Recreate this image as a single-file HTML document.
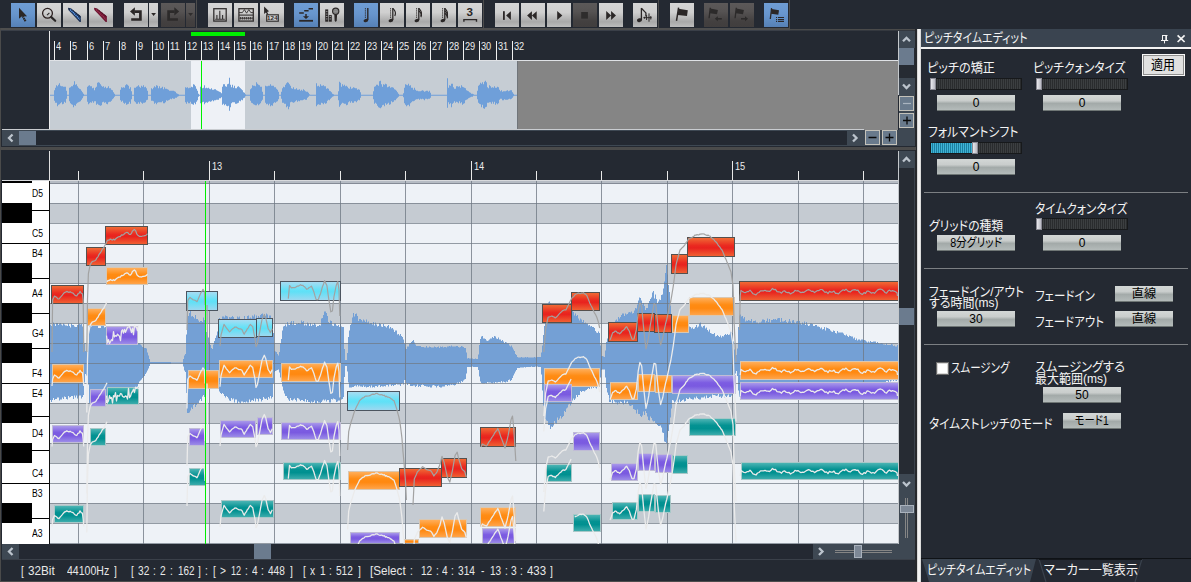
<!DOCTYPE html>
<html><head><meta charset="utf-8"><title>Pitch Time Edit</title>
<style>
html,body{margin:0;padding:0;background:#242932;}
#app{position:relative;width:1191px;height:582px;overflow:hidden;background:#242932;font-family:"Liberation Sans","Noto Sans CJK JP",sans-serif;color:#f2f2f2;}
#app div,#app span,#app svg{position:absolute;box-sizing:border-box;}
.tb{top:3px;width:24px;height:24px;background:linear-gradient(to bottom,#d5d5d5 0%,#cfcfcf 40%,#a9a9a9 78%,#bcbcbc 100%);}
.tb.bl{background:linear-gradient(to bottom,#6f9dd4 0%,#6896ce 45%,#5681b6 100%);}
.tb.dk{background:linear-gradient(to bottom,#5c5959 0%,#565353 35%,#434040 75%,#413e3e 100%);}
.tb svg{left:0;top:0;width:24px;height:24px;}
.dd{top:3px;width:9px;height:24px;background:linear-gradient(to bottom,#d5d5d5 0%,#cfcfcf 40%,#a9a9a9 78%,#bcbcbc 100%);}
.dd.dk{background:linear-gradient(to bottom,#5c5959 0%,#565353 35%,#434040 75%,#413e3e 100%);}
.sbb{background:#3e4853;}
.thumb{background:#6b7b8e;}
.pm{background:#697a8c;border:1px solid #c4c2ba;}
.lbl{font-size:13px;line-height:13px;white-space:nowrap;color:#f4f4f4;font-feature-settings:"palt";transform-origin:0 0;}
.vbtn{height:16px;background:linear-gradient(to bottom,#d3d7d6 0%,#c9cdcc 38%,#a3aaa9 56%,#b4bbba 100%);border-bottom:1px solid #6f7675;color:#000;font-size:12px;line-height:17px;text-align:center;white-space:nowrap;}
.vbtn span{position:static !important;display:inline-block;font-feature-settings:"palt";}
.sl{height:12px;background:repeating-linear-gradient(to right,#3c3f41 0px,#3c3f41 1px,#2a2c2e 1px,#2a2c2e 2px);border:1px solid #17191b;}
.slh{width:6px;height:12px;background:linear-gradient(to right,#e9e9ee,#b9b9c2);border:1px solid #8a8a94;}
.sep{height:1px;background:#7c7f83;left:924px;width:264px;}
.kl{font-size:10px;line-height:10px;color:#000;left:32px;transform:scaleX(0.86);transform-origin:0 0;white-space:nowrap;}
.rl{font-size:10px;line-height:10px;color:#ececec;white-space:nowrap;transform:scaleX(0.92);transform-origin:0 0;}
.st{font-size:12px;line-height:12px;top:564.5px;color:#e8e8e8;white-space:pre;transform-origin:0 0;}
</style></head><body>
<div id="app">
<div class="tb bl" style="left:11px"><svg viewBox="0 0 24 24"><path d="M8 4.8 L8 15.8 L10.6 13.4 L12.3 13.4 L16 13.2 Z" fill="#2b2727"/><path d="M11.6 13.2 L14.6 18.4" stroke="#2b2727" stroke-width="2.1" stroke-dasharray="1.6 0.5"/></svg></div>
<div class="tb " style="left:37px"><svg viewBox="0 0 24 24"><circle cx="10.5" cy="10.3" r="4.9" fill="none" stroke="#2a1e1e" stroke-width="1.3"/><path d="M14.3 14.1 L18.2 17.8" stroke="#2b2727" stroke-width="2.2" stroke-linecap="round"/><path d="M10 12.2 L12.4 9.9" stroke="#2b2727" stroke-width="1.1"/></svg></div>
<div class="tb " style="left:63px"><svg viewBox="0 0 24 24"><path d="M5 4.8 L7.6 5.3 L17.9 13.2 L17.9 18.9 L16.7 18.9 L5.4 7 Z" fill="#1c2f52"/><path d="M7.2 6.6 L17 16.4" stroke="#5b9cf0" stroke-width="1.5" stroke-dasharray="1.2 0.7"/><path d="M8.6 6.2 L17.6 13.6" stroke="#0e1830" stroke-width="1" stroke-dasharray="1 1"/></svg></div>
<div class="tb " style="left:89px"><svg viewBox="0 0 24 24"><path d="M5 4.8 L7.6 5.3 L17.9 13.2 L17.9 18.9 L16.7 18.9 L5.4 7 Z" fill="#6e1430"/><path d="M7.2 6.6 L17 16.4" stroke="#98304e" stroke-width="1.4" stroke-dasharray="1.2 0.7"/><path d="M8.6 6.2 L17.6 13.6" stroke="#3a0a18" stroke-width="1" stroke-dasharray="1 1"/></svg></div>
<div class="tb " style="left:124px"><svg viewBox="0 0 24 24"><path d="M10.5 8.6 H16.4 V16.5 H7.2" fill="none" stroke="#2b2727" stroke-width="2.7"/><path d="M6 8.5 L10.9 4.2 V12.8 Z" fill="#2b2727"/></svg></div>
<div class="tb dk" style="left:161px"><svg viewBox="0 0 24 24"><path d="M13.6 8.6 H7.6 V16.5 H16.9" fill="none" stroke="#2c2a2a" stroke-width="2.7"/><path d="M18.2 8.4 L13.3 4.2 V12.6 Z" fill="#2c2a2a"/></svg></div>
<div class="tb " style="left:208px"><svg viewBox="0 0 24 24"><rect x="5.8" y="5.7" width="12.4" height="12.4" fill="none" stroke="#333030" stroke-width="1.3"/><path d="M8.9 16 V12.1 M11.8 16 V7.7 M14.6 16 V12.1" stroke="#333030" stroke-width="1.1"/><path d="M7.2 16.3 H16.8" stroke="#333030" stroke-width="0.9"/></svg></div>
<div class="tb " style="left:234px"><svg viewBox="0 0 24 24"><rect x="4.9" y="5.7" width="14.4" height="12.4" fill="none" stroke="#333030" stroke-width="1.3"/><path d="M5 9.6 H8.4 L10.4 6.6 L12.6 10.2 L14.8 6.6 L16.8 9.6 H19" fill="none" stroke="#333030" stroke-width="0.9"/><path d="M5 12.1 H19" stroke="#333030" stroke-width="1.1"/><path d="M5.5 15.2 H18.8" stroke="#333030" stroke-width="0.9"/><path d="M6.2 15.2 H18.6" stroke="#333030" stroke-width="2.6" stroke-dasharray="0.9 1.1"/></svg></div>
<div class="tb " style="left:260px"><svg viewBox="0 0 24 24"><g transform="translate(-2,0)"><path d="M6.1 3.6 L6.1 11 L7.9 9.4 L9.4 12 L10.4 11.4 L9.2 9 L11 8.2 Z" fill="#2b2727"/><rect x="8.7" y="11.8" width="11.6" height="6.4" fill="#cfcfcf" stroke="#333030" stroke-width="1.2"/><text x="14.5" y="17.3" font-size="6.2" text-anchor="middle" fill="#2b2727" font-family="Liberation Sans,sans-serif" font-weight="bold" letter-spacing="0.3">124</text></g></svg></div>
<div class="tb bl" style="left:294px"><svg viewBox="0 0 24 24"><path d="M14.6 5.7 H19 M10.2 7.8 H14.6 M5.2 10 H9.8" stroke="#2b2727" stroke-width="1.6"/><path d="M12 11 V14" stroke="#2b2727" stroke-width="1.5"/><path d="M8.9 13.3 H15.1 L12 15.9 Z" fill="#2b2727"/><path d="M5.2 17.8 H19" stroke="#2b2727" stroke-width="1.8"/></svg></div>
<div class="tb " style="left:320px"><svg viewBox="0 0 24 24"><rect x="5.2" y="6.4" width="3" height="12.3" fill="#2b2727"/><rect x="8.8" y="12.1" width="3" height="6.6" fill="#2b2727"/><path d="M5.9 8.6 H7.5" stroke="#bdbdbd" stroke-width="0.7"/><path d="M5.9 11.05 H7.5" stroke="#bdbdbd" stroke-width="0.7"/><path d="M5.9 13.5 H7.5" stroke="#bdbdbd" stroke-width="0.7"/><path d="M5.9 15.95 H7.5" stroke="#bdbdbd" stroke-width="0.7"/><path d="M9.5 13.5 H11.1" stroke="#bdbdbd" stroke-width="0.7"/><path d="M9.5 15.95 H11.1" stroke="#bdbdbd" stroke-width="0.7"/><circle cx="15.7" cy="8.2" r="3.1" fill="#979797" stroke="#2b2727" stroke-width="1.2"/><path d="M13.2 7.2 H18.2 M13.2 9.2 H18.2" stroke="#6a6a6a" stroke-width="0.6"/><path d="M14.3 11.5 H17.1 L16.7 17.8 L15.7 19 L14.7 17.8 Z" fill="#2b2727"/></svg></div>
<div class="tb bl" style="left:354px"><svg viewBox="0 0 24 24"><path d="M13.8 4.9 V17" stroke="#2b2727" stroke-width="1.4"/><path d="M11.4 5.2 V15.6" stroke="#2b2727" stroke-width="1" stroke-dasharray="1.2 0.9"/><ellipse cx="11.9" cy="17.5" rx="2.4" ry="1.7" fill="#2b2727" transform="rotate(-18 11.9 17.5)"/></svg></div>
<div class="tb " style="left:380px"><svg viewBox="0 0 24 24"><path d="M12.8 4.9 V17" stroke="#2b2727" stroke-width="1.3"/><path d="M10.6 5.2 V15.6" stroke="#2b2727" stroke-width="1" stroke-dasharray="1.2 0.9"/><ellipse cx="10.9" cy="17.5" rx="2.4" ry="1.7" fill="#2b2727" transform="rotate(-18 10.9 17.5)"/><path d="M12.8 5.4 C14.6 7.0 16.8 9.0 14.8 13.0" fill="none" stroke="#2b2727" stroke-width="1.2"/></svg></div>
<div class="tb " style="left:406px"><svg viewBox="0 0 24 24"><path d="M12.8 4.9 V17" stroke="#2b2727" stroke-width="1.3"/><path d="M10.6 5.2 V15.6" stroke="#2b2727" stroke-width="1" stroke-dasharray="1.2 0.9"/><ellipse cx="10.9" cy="17.5" rx="2.4" ry="1.7" fill="#2b2727" transform="rotate(-18 10.9 17.5)"/><path d="M12.8 5.4 C14.6 7.0 16.8 9.0 14.8 13.0" fill="none" stroke="#2b2727" stroke-width="1.2"/><path d="M12.8 7.8 C14.6 9.4 16.8 11.4 14.8 14.2" fill="none" stroke="#2b2727" stroke-width="1.2"/></svg></div>
<div class="tb " style="left:432px"><svg viewBox="0 0 24 24"><path d="M12.8 4.9 V17" stroke="#2b2727" stroke-width="1.3"/><path d="M10.6 5.2 V15.6" stroke="#2b2727" stroke-width="1" stroke-dasharray="1.2 0.9"/><ellipse cx="10.9" cy="17.5" rx="2.4" ry="1.7" fill="#2b2727" transform="rotate(-18 10.9 17.5)"/><path d="M12.8 5.4 C14.6 7.0 16.8 9.0 14.8 13.0" fill="none" stroke="#2b2727" stroke-width="1.2"/><path d="M12.8 7.8 C14.6 9.4 16.8 11.4 14.8 14.2" fill="none" stroke="#2b2727" stroke-width="1.2"/><path d="M12.8 10.2 C14.6 11.8 16.8 13.8 14.8 15.4" fill="none" stroke="#2b2727" stroke-width="1.2"/></svg></div>
<div class="tb " style="left:458px"><svg viewBox="0 0 24 24"><text x="11.7" y="13.4" font-size="11.6" font-weight="bold" text-anchor="middle" fill="#2b2727" font-family="Liberation Sans,sans-serif">3</text><path d="M5.9 18.8 V16.6 H18.5 V18.8" fill="none" stroke="#2b2727" stroke-width="1.4"/></svg></div>
<div class="tb " style="left:495px"><svg viewBox="0 0 24 24"><rect x="8" y="8.2" width="1.8" height="8.7" fill="#2b2727"/><path d="M15.9 8.2 V16.9 L11.1 12.55 Z" fill="#2b2727"/></svg></div>
<div class="tb " style="left:521px"><svg viewBox="0 0 24 24"><path d="M10.9 8.2 V16.9 L6.1 12.55 Z M15.7 8.2 V16.9 L10.9 12.55 Z" fill="#2b2727"/></svg></div>
<div class="tb " style="left:547px"><svg viewBox="0 0 24 24"><path d="M10.2 7.9 V17 L15.3 12.45 Z" fill="#2b2727"/></svg></div>
<div class="tb dk" style="left:573px"><svg viewBox="0 0 24 24"><rect x="8.2" y="9" width="6.7" height="6.6" fill="#2e2c2c"/></svg></div>
<div class="tb " style="left:599px"><svg viewBox="0 0 24 24"><path d="M7.2 7.9 V17 L12.1 12.45 Z M12.1 7.9 V17 L17 12.45 Z" fill="#2b2727"/></svg></div>
<div class="tb " style="left:633px"><svg viewBox="0 0 24 24"><path d="M8.4 5 V17" stroke="#2b2727" stroke-width="1.3"/><path d="M8.4 5.2 L12.9 9.9 V13.4" fill="none" stroke="#2b2727" stroke-width="1.3"/><ellipse cx="6.5" cy="17.2" rx="2.6" ry="1.9" fill="#2b2727" transform="rotate(-15 6.5 17.2)"/><path d="M10.6 14.7 H18.6 M13.6 12.1 V17 M16 10.4 V18.7 M17.8 13 V16.5" stroke="#2b2727" stroke-width="1"/><path d="M10.3 14.7 L12 13.5 V15.9 Z" fill="#2b2727"/></svg></div>
<div class="tb " style="left:670px"><svg viewBox="0 0 24 24"><path d="M8.6 4.7 L6.5 17.8" stroke="#2b2727" stroke-width="1.5"/><path d="M8.6 5.8 L17.8 7.3 L17 13 L7.6 12 Z" fill="#2b2727"/></svg></div>
<div class="tb dk" style="left:704px"><svg viewBox="0 0 24 24"><path d="M6.3 4.7 L5.1 15.2" stroke="#2c2a2a" stroke-width="1.3"/><path d="M6.4 5.6 L13.9 6.9 L13 11.2 L5.7 10.3 Z" fill="#2c2a2a"/><path d="M12 15.8 H17.8" stroke="#2c2a2a" stroke-width="1.6"/><path d="M10.8 15.8 L13.8 13.3 V18.3 Z" fill="#2c2a2a"/></svg></div>
<div class="tb dk" style="left:730px"><svg viewBox="0 0 24 24"><path d="M6.3 4.7 L5.1 15.2" stroke="#2c2a2a" stroke-width="1.3"/><path d="M6.4 5.6 L13.9 6.9 L13 11.2 L5.7 10.3 Z" fill="#2c2a2a"/><path d="M11 15.8 H16.8" stroke="#2c2a2a" stroke-width="1.6"/><path d="M18 15.8 L15 13.3 V18.3 Z" fill="#2c2a2a"/></svg></div>
<div class="tb bl" style="left:764px"><svg viewBox="0 0 24 24"><path d="M7.6 5.1 L6.3 16" stroke="#2b2727" stroke-width="1.3"/><path d="M7.7 6 L15 7.3 L14.3 11.7 L7 10.8 Z" fill="#2b2727"/><path d="M12 14.5 H13.1 M14 14.5 H20 M12 16.5 H13.1 M14 16.5 H20 M12 18.4 H13.1 M14 18.4 H20" stroke="#2b2727" stroke-width="1.1"/></svg></div>
<div class="dd" style="left:149px"><svg viewBox="0 0 9 24" style="left:0;top:0;width:9px;height:24px"><path d="M2.2 10.1 H7 L4.6 13 Z" fill="#2b2727"/></svg></div>
<div class="dd dk" style="left:186px"><svg viewBox="0 0 9 24" style="left:0;top:0;width:9px;height:24px"><path d="M2.2 10.1 H7 L4.6 13 Z" fill="#2f2d2d"/></svg></div>
<div style="left:196px;top:0;width:1px;height:28px;background:#4c4c4c"></div>
<div style="left:483px;top:0;width:1px;height:28px;background:#4c4c4c"></div>
<div style="left:658px;top:0;width:1px;height:28px;background:#4c4c4c"></div>
<div style="left:789px;top:0;width:1px;height:28px;background:#4c4c4c"></div>
<div style="left:0;top:28px;width:790px;height:2px;background:#4e4e4e"></div>
<div style="left:0;top:28px;width:1px;height:554px;background:#4a4a4a"></div>
<div style="left:1px;top:30px;width:897px;height:1px;background:#3a3f48"></div>
<div style="left:790px;top:29px;width:126px;height:1px;background:#4a4a4a"></div>
<div style="left:790px;top:30px;width:126px;height:1px;background:#34383f"></div>
<div style="left:49px;top:60px;width:849px;height:1px;background:#dfe2e6"></div>
<div style="left:50px;top:61px;width:468px;height:68px;background:#c6cdd4"></div>
<div style="left:518px;top:61px;width:380px;height:69px;background:#858585"></div>
<div style="left:191px;top:61px;width:54px;height:68px;background:#eef1f6"></div>
<div style="left:2px;top:129px;width:862px;height:1px;background:#c9ccd0"></div>
<div style="left:49px;top:31px;width:1px;height:98px;background:#ececec"></div>
<div style="left:191px;top:32px;width:54px;height:4px;background:#00ee00"></div>
<div style="left:54px;top:41px;width:1px;height:19px;background:#f0f0f0"></div><div class="rl" style="left:56px;top:42px">4</div>
<div style="left:70px;top:41px;width:1px;height:19px;background:#f0f0f0"></div><div class="rl" style="left:72px;top:42px">5</div>
<div style="left:87px;top:41px;width:1px;height:19px;background:#f0f0f0"></div><div class="rl" style="left:89px;top:42px">6</div>
<div style="left:103px;top:41px;width:1px;height:19px;background:#f0f0f0"></div><div class="rl" style="left:105px;top:42px">7</div>
<div style="left:119px;top:41px;width:1px;height:19px;background:#f0f0f0"></div><div class="rl" style="left:121px;top:42px">8</div>
<div style="left:136px;top:41px;width:1px;height:19px;background:#f0f0f0"></div><div class="rl" style="left:138px;top:42px">9</div>
<div style="left:152px;top:41px;width:1px;height:19px;background:#f0f0f0"></div><div class="rl" style="left:154px;top:42px">10</div>
<div style="left:168px;top:41px;width:1px;height:19px;background:#f0f0f0"></div><div class="rl" style="left:170px;top:42px">11</div>
<div style="left:185px;top:41px;width:1px;height:19px;background:#f0f0f0"></div><div class="rl" style="left:187px;top:42px">12</div>
<div style="left:201px;top:41px;width:1px;height:19px;background:#f0f0f0"></div><div class="rl" style="left:203px;top:42px">13</div>
<div style="left:218px;top:41px;width:1px;height:19px;background:#f0f0f0"></div><div class="rl" style="left:220px;top:42px">14</div>
<div style="left:234px;top:41px;width:1px;height:19px;background:#f0f0f0"></div><div class="rl" style="left:236px;top:42px">15</div>
<div style="left:250px;top:41px;width:1px;height:19px;background:#f0f0f0"></div><div class="rl" style="left:252px;top:42px">16</div>
<div style="left:267px;top:41px;width:1px;height:19px;background:#f0f0f0"></div><div class="rl" style="left:269px;top:42px">17</div>
<div style="left:283px;top:41px;width:1px;height:19px;background:#f0f0f0"></div><div class="rl" style="left:285px;top:42px">18</div>
<div style="left:299px;top:41px;width:1px;height:19px;background:#f0f0f0"></div><div class="rl" style="left:301px;top:42px">19</div>
<div style="left:316px;top:41px;width:1px;height:19px;background:#f0f0f0"></div><div class="rl" style="left:318px;top:42px">20</div>
<div style="left:332px;top:41px;width:1px;height:19px;background:#f0f0f0"></div><div class="rl" style="left:334px;top:42px">21</div>
<div style="left:348px;top:41px;width:1px;height:19px;background:#f0f0f0"></div><div class="rl" style="left:350px;top:42px">22</div>
<div style="left:365px;top:41px;width:1px;height:19px;background:#f0f0f0"></div><div class="rl" style="left:367px;top:42px">23</div>
<div style="left:381px;top:41px;width:1px;height:19px;background:#f0f0f0"></div><div class="rl" style="left:383px;top:42px">24</div>
<div style="left:397px;top:41px;width:1px;height:19px;background:#f0f0f0"></div><div class="rl" style="left:399px;top:42px">25</div>
<div style="left:414px;top:41px;width:1px;height:19px;background:#f0f0f0"></div><div class="rl" style="left:416px;top:42px">26</div>
<div style="left:430px;top:41px;width:1px;height:19px;background:#f0f0f0"></div><div class="rl" style="left:432px;top:42px">27</div>
<div style="left:447px;top:41px;width:1px;height:19px;background:#f0f0f0"></div><div class="rl" style="left:449px;top:42px">28</div>
<div style="left:463px;top:41px;width:1px;height:19px;background:#f0f0f0"></div><div class="rl" style="left:465px;top:42px">29</div>
<div style="left:479px;top:41px;width:1px;height:19px;background:#f0f0f0"></div><div class="rl" style="left:481px;top:42px">30</div>
<div style="left:496px;top:41px;width:1px;height:19px;background:#f0f0f0"></div><div class="rl" style="left:498px;top:42px">31</div>
<div style="left:512px;top:41px;width:1px;height:19px;background:#f0f0f0"></div><div class="rl" style="left:514px;top:42px">32</div>
<svg style="left:0;top:0;width:1191px;height:582px" viewBox="0 0 1191 582"><path d="M50 94.8 L51 94.8 L51 94.8 L52 94.8 L52 94.8 L53 94.8 L53 94.8 L54 94.8 L54 90.3 L55 90.3 L55 87.8 L56 87.8 L56 85.3 L57 85.3 L57 86.3 L58 86.3 L58 84.8 L59 84.8 L59 83.3 L60 83.3 L60 85.8 L61 85.8 L61 86.3 L62 86.3 L62 86.3 L63 86.3 L63 86.8 L64 86.8 L64 86.8 L65 86.8 L65 86.8 L66 86.8 L66 90.8 L67 90.8 L67 94.8 L68 94.8 L68 94.8 L69 94.8 L69 87.8 L70 87.8 L70 87.3 L71 87.3 L71 86.3 L72 86.3 L72 86.3 L73 86.3 L73 84.8 L74 84.8 L74 81.3 L75 81.3 L75 84.8 L76 84.8 L76 84.3 L77 84.3 L77 86.3 L78 86.3 L78 87.8 L79 87.8 L79 88.8 L80 88.8 L80 89.3 L81 89.3 L81 90.8 L82 90.8 L82 92.3 L83 92.3 L83 93.8 L84 93.8 L84 94.8 L85 94.8 L85 94.8 L86 94.8 L86 94.8 L87 94.8 L87 86.8 L88 86.8 L88 85.8 L89 85.8 L89 85.3 L90 85.3 L90 86.3 L91 86.3 L91 86.3 L92 86.3 L92 88.3 L93 88.3 L93 87.8 L94 87.8 L94 90.3 L95 90.3 L95 87.8 L96 87.8 L96 86.8 L97 86.8 L97 82.8 L98 82.8 L98 82.3 L99 82.3 L99 82.8 L100 82.8 L100 84.3 L101 84.3 L101 85.8 L102 85.8 L102 86.8 L103 86.8 L103 86.3 L104 86.3 L104 87.8 L105 87.8 L105 86.8 L106 86.8 L106 88.3 L107 88.3 L107 87.8 L108 87.8 L108 86.3 L109 86.3 L109 88.3 L110 88.3 L110 88.3 L111 88.3 L111 89.8 L112 89.8 L112 90.3 L113 90.3 L113 92.3 L114 92.3 L114 93.8 L115 93.8 L115 94.8 L116 94.8 L116 94.8 L117 94.8 L117 94.8 L118 94.8 L118 94.8 L119 94.8 L119 94.8 L120 94.8 L120 89.8 L121 89.8 L121 87.3 L122 87.3 L122 87.8 L123 87.8 L123 87.3 L124 87.3 L124 87.8 L125 87.8 L125 85.3 L126 85.3 L126 84.3 L127 84.3 L127 84.8 L128 84.8 L128 85.8 L129 85.8 L129 88.8 L130 88.8 L130 87.3 L131 87.3 L131 91.3 L132 91.3 L132 94.8 L133 94.8 L133 94.8 L134 94.8 L134 87.8 L135 87.8 L135 87.8 L136 87.8 L136 86.8 L137 86.8 L137 86.3 L138 86.3 L138 85.3 L139 85.3 L139 86.8 L140 86.8 L140 87.8 L141 87.8 L141 85.8 L142 85.8 L142 86.8 L143 86.8 L143 85.3 L144 85.3 L144 87.3 L145 87.3 L145 86.8 L146 86.8 L146 88.3 L147 88.3 L147 90.8 L148 90.8 L148 94.8 L149 94.8 L149 94.8 L150 94.8 L150 94.8 L151 94.8 L151 88.3 L152 88.3 L152 89.3 L153 89.3 L153 87.8 L154 87.8 L154 86.3 L155 86.3 L155 87.3 L156 87.3 L156 85.3 L157 85.3 L157 85.8 L158 85.8 L158 88.3 L159 88.3 L159 86.3 L160 86.3 L160 88.3 L161 88.3 L161 87.8 L162 87.8 L162 86.8 L163 86.8 L163 89.3 L164 89.3 L164 87.3 L165 87.3 L165 88.8 L166 88.8 L166 88.8 L167 88.8 L167 89.3 L168 89.3 L168 89.8 L169 89.8 L169 90.8 L170 90.8 L170 90.8 L171 90.8 L171 90.8 L172 90.8 L172 90.8 L173 90.8 L173 90.8 L174 90.8 L174 91.3 L175 91.3 L175 91.8 L176 91.8 L176 93.3 L177 93.3 L177 93.8 L178 93.8 L178 94.3 L179 94.3 L179 94.8 L180 94.8 L180 94.8 L181 94.8 L181 94.8 L182 94.8 L182 94.8 L183 94.8 L183 94.8 L184 94.8 L184 94.8 L185 94.8 L185 87.3 L186 87.3 L186 87.8 L187 87.8 L187 87.3 L188 87.3 L188 88.3 L189 88.3 L189 87.8 L190 87.8 L190 87.8 L191 87.8 L191 86.8 L192 86.8 L192 87.3 L193 87.3 L193 84.3 L194 84.3 L194 84.8 L195 84.8 L195 86.3 L196 86.3 L196 88.8 L197 88.8 L197 90.8 L198 90.8 L198 93.8 L199 93.8 L199 94.8 L200 94.8 L200 86.8 L201 86.8 L201 85.8 L202 85.8 L202 88.3 L203 88.3 L203 87.8 L204 87.8 L204 85.3 L205 85.3 L205 88.3 L206 88.3 L206 87.8 L207 87.8 L207 88.3 L208 88.3 L208 87.8 L209 87.8 L209 88.8 L210 88.8 L210 89.3 L211 89.3 L211 88.3 L212 88.3 L212 89.8 L213 89.8 L213 89.8 L214 89.8 L214 89.3 L215 89.3 L215 89.3 L216 89.3 L216 90.3 L217 90.3 L217 90.8 L218 90.8 L218 91.3 L219 91.3 L219 91.8 L220 91.8 L220 92.3 L221 92.3 L221 93.3 L222 93.3 L222 86.8 L223 86.8 L223 84.3 L224 84.3 L224 84.3 L225 84.3 L225 86.3 L226 86.3 L226 86.8 L227 86.8 L227 84.3 L228 84.3 L228 83.8 L229 83.8 L229 77.8 L230 77.8 L230 84.8 L231 84.8 L231 87.3 L232 87.3 L232 84.8 L233 84.8 L233 87.8 L234 87.8 L234 85.8 L235 85.8 L235 88.3 L236 88.3 L236 88.3 L237 88.3 L237 86.8 L238 86.8 L238 86.3 L239 86.3 L239 87.3 L240 87.3 L240 88.3 L241 88.3 L241 89.3 L242 89.3 L242 90.3 L243 90.3 L243 92.3 L244 92.3 L244 92.8 L245 92.8 L245 94.3 L246 94.3 L246 94.8 L247 94.8 L247 94.8 L248 94.8 L248 94.8 L249 94.8 L249 94.8 L250 94.8 L250 89.3 L251 89.3 L251 88.3 L252 88.3 L252 85.3 L253 85.3 L253 85.8 L254 85.8 L254 85.8 L255 85.8 L255 86.3 L256 86.3 L256 82.3 L257 82.3 L257 83.8 L258 83.8 L258 84.8 L259 84.8 L259 85.3 L260 85.3 L260 86.8 L261 86.8 L261 86.8 L262 86.8 L262 91.8 L263 91.8 L263 94.8 L264 94.8 L264 94.8 L265 94.8 L265 85.8 L266 85.8 L266 86.3 L267 86.3 L267 86.3 L268 86.3 L268 85.8 L269 85.8 L269 85.8 L270 85.8 L270 84.3 L271 84.3 L271 85.8 L272 85.8 L272 85.8 L273 85.8 L273 85.8 L274 85.8 L274 87.3 L275 87.3 L275 87.3 L276 87.3 L276 88.8 L277 88.8 L277 89.8 L278 89.8 L278 91.8 L279 91.8 L279 94.8 L280 94.8 L280 94.8 L281 94.8 L281 91.8 L282 91.8 L282 88.3 L283 88.3 L283 86.8 L284 86.8 L284 87.3 L285 87.3 L285 84.8 L286 84.8 L286 83.3 L287 83.3 L287 82.3 L288 82.3 L288 82.8 L289 82.8 L289 84.3 L290 84.3 L290 85.8 L291 85.8 L291 88.3 L292 88.3 L292 88.8 L293 88.8 L293 87.3 L294 87.3 L294 89.3 L295 89.3 L295 89.3 L296 89.3 L296 88.3 L297 88.3 L297 89.8 L298 89.8 L298 89.8 L299 89.8 L299 89.3 L300 89.3 L300 90.8 L301 90.8 L301 89.8 L302 89.8 L302 90.8 L303 90.8 L303 89.3 L304 89.3 L304 90.3 L305 90.3 L305 91.3 L306 91.3 L306 91.8 L307 91.8 L307 91.8 L308 91.8 L308 92.8 L309 92.8 L309 94.3 L310 94.3 L310 94.8 L311 94.8 L311 94.8 L312 94.8 L312 94.8 L313 94.8 L313 94.8 L314 94.8 L314 94.8 L315 94.8 L315 94.8 L316 94.8 L316 83.3 L317 83.3 L317 86.3 L318 86.3 L318 85.8 L319 85.8 L319 86.8 L320 86.8 L320 84.3 L321 84.3 L321 85.8 L322 85.8 L322 85.8 L323 85.8 L323 85.3 L324 85.3 L324 86.3 L325 86.3 L325 86.3 L326 86.3 L326 88.8 L327 88.8 L327 88.3 L328 88.3 L328 88.8 L329 88.8 L329 90.8 L330 90.8 L330 91.3 L331 91.3 L331 92.3 L332 92.3 L332 93.8 L333 93.8 L333 94.3 L334 94.3 L334 94.8 L335 94.8 L335 94.8 L336 94.8 L336 94.8 L337 94.8 L337 94.8 L338 94.8 L338 91.3 L339 91.3 L339 81.8 L340 81.8 L340 82.8 L341 82.8 L341 86.8 L342 86.8 L342 84.3 L343 84.3 L343 85.8 L344 85.8 L344 84.8 L345 84.8 L345 86.3 L346 86.3 L346 85.8 L347 85.8 L347 86.8 L348 86.8 L348 88.3 L349 88.3 L349 88.8 L350 88.8 L350 86.8 L351 86.8 L351 88.8 L352 88.8 L352 88.3 L353 88.3 L353 87.3 L354 87.3 L354 87.8 L355 87.8 L355 88.3 L356 88.3 L356 88.3 L357 88.3 L357 89.8 L358 89.8 L358 89.3 L359 89.3 L359 89.8 L360 89.8 L360 92.3 L361 92.3 L361 94.8 L362 94.8 L362 94.8 L363 94.8 L363 94.8 L364 94.8 L364 94.8 L365 94.8 L365 94.8 L366 94.8 L366 94.8 L367 94.8 L367 94.8 L368 94.8 L368 94.8 L369 94.8 L369 94.8 L370 94.8 L370 94.8 L371 94.8 L371 94.8 L372 94.8 L372 94.8 L373 94.8 L373 91.3 L374 91.3 L374 86.8 L375 86.8 L375 86.3 L376 86.3 L376 84.8 L377 84.8 L377 84.8 L378 84.8 L378 85.8 L379 85.8 L379 81.3 L380 81.3 L380 80.8 L381 80.8 L381 84.3 L382 84.3 L382 86.8 L383 86.8 L383 84.3 L384 84.3 L384 84.8 L385 84.8 L385 83.8 L386 83.8 L386 84.3 L387 84.3 L387 87.3 L388 87.3 L388 86.8 L389 86.8 L389 86.3 L390 86.3 L390 87.8 L391 87.8 L391 87.3 L392 87.3 L392 87.3 L393 87.3 L393 87.8 L394 87.8 L394 89.3 L395 89.3 L395 89.8 L396 89.8 L396 90.8 L397 90.8 L397 92.3 L398 92.3 L398 93.8 L399 93.8 L399 94.8 L400 94.8 L400 94.8 L401 94.8 L401 94.8 L402 94.8 L402 94.8 L403 94.8 L403 93.3 L404 93.3 L404 87.8 L405 87.8 L405 84.3 L406 84.3 L406 84.8 L407 84.8 L407 85.3 L408 85.3 L408 83.8 L409 83.8 L409 85.8 L410 85.8 L410 85.3 L411 85.3 L411 87.8 L412 87.8 L412 87.8 L413 87.8 L413 89.8 L414 89.8 L414 87.8 L415 87.8 L415 89.8 L416 89.8 L416 90.8 L417 90.8 L417 90.8 L418 90.8 L418 91.3 L419 91.3 L419 91.3 L420 91.3 L420 91.3 L421 91.3 L421 90.8 L422 90.8 L422 90.3 L423 90.3 L423 90.8 L424 90.8 L424 91.8 L425 91.8 L425 91.3 L426 91.3 L426 90.8 L427 90.8 L427 90.8 L428 90.8 L428 91.8 L429 91.8 L429 90.8 L430 90.8 L430 92.8 L431 92.8 L431 94.8 L432 94.8 L432 94.8 L433 94.8 L433 94.8 L434 94.8 L434 94.8 L435 94.8 L435 94.8 L436 94.8 L436 94.8 L437 94.8 L437 94.8 L438 94.8 L438 94.8 L439 94.8 L439 94.8 L440 94.8 L440 94.8 L441 94.8 L441 94.8 L442 94.8 L442 94.8 L443 94.8 L443 94.8 L444 94.8 L444 94.8 L445 94.8 L445 94.8 L446 94.8 L446 94.8 L447 94.8 L447 78.3 L448 78.3 L448 87.8 L449 87.8 L449 85.3 L450 85.3 L450 85.8 L451 85.8 L451 83.8 L452 83.8 L452 83.8 L453 83.8 L453 87.3 L454 87.3 L454 88.8 L455 88.8 L455 88.8 L456 88.8 L456 86.3 L457 86.3 L457 86.3 L458 86.3 L458 86.8 L459 86.8 L459 86.3 L460 86.3 L460 87.8 L461 87.8 L461 85.3 L462 85.3 L462 86.8 L463 86.8 L463 87.3 L464 87.3 L464 87.8 L465 87.8 L465 88.3 L466 88.3 L466 90.3 L467 90.3 L467 90.8 L468 90.8 L468 91.3 L469 91.3 L469 92.3 L470 92.3 L470 92.8 L471 92.8 L471 93.8 L472 93.8 L472 93.8 L473 93.8 L473 94.3 L474 94.3 L474 94.8 L475 94.8 L475 94.8 L476 94.8 L476 94.8 L477 94.8 L477 90.8 L478 90.8 L478 85.8 L479 85.8 L479 84.8 L480 84.8 L480 82.8 L481 82.8 L481 83.8 L482 83.8 L482 82.3 L483 82.3 L483 84.3 L484 84.3 L484 81.8 L485 81.8 L485 80.8 L486 80.8 L486 82.3 L487 82.3 L487 87.3 L488 87.3 L488 88.3 L489 88.3 L489 85.3 L490 85.3 L490 86.3 L491 86.3 L491 87.8 L492 87.8 L492 87.3 L493 87.3 L493 87.8 L494 87.8 L494 86.3 L495 86.3 L495 87.8 L496 87.8 L496 87.8 L497 87.8 L497 86.8 L498 86.8 L498 87.3 L499 87.3 L499 89.8 L500 89.8 L500 91.3 L501 91.3 L501 90.3 L502 90.3 L502 91.8 L503 91.8 L503 91.3 L504 91.3 L504 91.3 L505 91.3 L505 91.3 L506 91.3 L506 90.8 L507 90.8 L507 90.3 L508 90.3 L508 91.3 L509 91.3 L509 90.8 L510 90.8 L510 90.3 L511 90.3 L511 90.3 L512 90.3 L512 92.3 L513 92.3 L513 93.8 L514 93.8 L514 94.8 L515 94.8 L515 94.8 L516 94.8 L516 94.8 L517 94.8 L517 94.8 L518 94.8 L518 95.8 L517 95.8 L517 95.8 L516 95.8 L516 95.8 L515 95.8 L515 95.8 L514 95.8 L514 96.3 L513 96.3 L513 97.8 L512 97.8 L512 98.8 L511 98.8 L511 99.3 L510 99.3 L510 98.8 L509 98.8 L509 99.3 L508 99.3 L508 99.8 L507 99.8 L507 99.8 L506 99.8 L506 99.8 L505 99.8 L505 99.3 L504 99.3 L504 100.3 L503 100.3 L503 100.3 L502 100.3 L502 98.8 L501 98.8 L501 98.8 L500 98.8 L500 99.8 L499 99.8 L499 103.3 L498 103.3 L498 104.3 L497 104.3 L497 103.3 L496 103.3 L496 104.8 L495 104.8 L495 101.8 L494 101.8 L494 103.8 L493 103.8 L493 101.8 L492 101.8 L492 103.8 L491 103.8 L491 102.3 L490 102.3 L490 102.3 L489 102.3 L489 102.8 L488 102.8 L488 102.8 L487 102.8 L487 106.8 L486 106.8 L486 107.3 L485 107.3 L485 108.8 L484 108.8 L484 108.3 L483 108.3 L483 104.8 L482 104.8 L482 107.3 L481 107.3 L481 104.3 L480 104.3 L480 103.8 L479 103.8 L479 102.8 L478 102.8 L478 99.3 L477 99.3 L477 95.8 L476 95.8 L476 95.8 L475 95.8 L475 95.8 L474 95.8 L474 95.8 L473 95.8 L473 96.8 L472 96.8 L472 96.8 L471 96.8 L471 97.3 L470 97.3 L470 97.8 L469 97.8 L469 98.3 L468 98.3 L468 99.3 L467 99.3 L467 99.8 L466 99.8 L466 100.3 L465 100.3 L465 103.3 L464 103.3 L464 103.8 L463 103.8 L463 104.8 L462 104.8 L462 102.3 L461 102.3 L461 103.3 L460 103.3 L460 101.3 L459 101.3 L459 103.3 L458 103.3 L458 102.3 L457 102.3 L457 101.8 L456 101.8 L456 102.8 L455 102.8 L455 101.3 L454 101.3 L454 102.8 L453 102.8 L453 103.8 L452 103.8 L452 107.3 L451 107.3 L451 103.3 L450 103.3 L450 104.3 L449 104.3 L449 102.3 L448 102.3 L448 107.8 L447 107.8 L447 95.8 L446 95.8 L446 95.8 L445 95.8 L445 95.8 L444 95.8 L444 95.8 L443 95.8 L443 95.8 L442 95.8 L442 95.8 L441 95.8 L441 95.8 L440 95.8 L440 95.8 L439 95.8 L439 95.8 L438 95.8 L438 95.8 L437 95.8 L437 95.8 L436 95.8 L436 95.8 L435 95.8 L435 95.8 L434 95.8 L434 95.8 L433 95.8 L433 95.8 L432 95.8 L432 95.8 L431 95.8 L431 97.8 L430 97.8 L430 98.8 L429 98.8 L429 98.8 L428 98.8 L428 99.3 L427 99.3 L427 98.8 L426 98.8 L426 98.8 L425 98.8 L425 100.3 L424 100.3 L424 99.3 L423 99.3 L423 98.8 L422 98.8 L422 99.3 L421 99.3 L421 98.8 L420 98.8 L420 99.8 L419 99.8 L419 98.8 L418 98.8 L418 99.3 L417 99.3 L417 99.3 L416 99.3 L416 99.8 L415 99.8 L415 100.8 L414 100.8 L414 101.3 L413 101.3 L413 101.3 L412 101.3 L412 102.3 L411 102.3 L411 103.3 L410 103.3 L410 106.3 L409 106.3 L409 104.8 L408 104.8 L408 105.3 L407 105.3 L407 106.3 L406 106.3 L406 104.8 L405 104.8 L405 103.3 L404 103.3 L404 97.3 L403 97.3 L403 95.8 L402 95.8 L402 95.8 L401 95.8 L401 95.8 L400 95.8 L400 95.8 L399 95.8 L399 96.8 L398 96.8 L398 97.8 L397 97.8 L397 98.8 L396 98.8 L396 100.3 L395 100.3 L395 100.3 L394 100.3 L394 101.8 L393 101.8 L393 102.3 L392 102.3 L392 101.3 L391 101.3 L391 104.3 L390 104.3 L390 104.8 L389 104.8 L389 102.8 L388 102.8 L388 103.8 L387 103.8 L387 104.8 L386 104.8 L386 103.3 L385 103.3 L385 106.3 L384 106.3 L384 104.8 L383 104.8 L383 105.3 L382 105.3 L382 107.3 L381 107.3 L381 108.3 L380 108.3 L380 107.8 L379 107.8 L379 107.3 L378 107.3 L378 105.8 L377 105.8 L377 103.8 L376 103.8 L376 102.8 L375 102.8 L375 103.8 L374 103.8 L374 99.3 L373 99.3 L373 95.8 L372 95.8 L372 95.8 L371 95.8 L371 95.8 L370 95.8 L370 95.8 L369 95.8 L369 95.8 L368 95.8 L368 95.8 L367 95.8 L367 95.8 L366 95.8 L366 95.8 L365 95.8 L365 95.8 L364 95.8 L364 95.8 L363 95.8 L363 95.8 L362 95.8 L362 95.8 L361 95.8 L361 97.8 L360 97.8 L360 100.3 L359 100.3 L359 99.8 L358 99.8 L358 100.8 L357 100.8 L357 102.3 L356 102.3 L356 101.3 L355 101.3 L355 101.3 L354 101.3 L354 102.8 L353 102.8 L353 102.8 L352 102.8 L352 101.3 L351 101.3 L351 102.8 L350 102.8 L350 101.3 L349 101.3 L349 102.3 L348 102.3 L348 104.8 L347 104.8 L347 105.3 L346 105.3 L346 103.8 L345 103.8 L345 103.8 L344 103.8 L344 103.3 L343 103.3 L343 102.8 L342 102.8 L342 103.8 L341 103.8 L341 105.3 L340 105.3 L340 106.8 L339 106.8 L339 100.3 L338 100.3 L338 95.8 L337 95.8 L337 95.8 L336 95.8 L336 95.8 L335 95.8 L335 95.8 L334 95.8 L334 96.3 L333 96.3 L333 96.8 L332 96.8 L332 97.8 L331 97.8 L331 98.8 L330 98.8 L330 100.3 L329 100.3 L329 99.8 L328 99.8 L328 100.8 L327 100.8 L327 103.3 L326 103.3 L326 103.8 L325 103.8 L325 102.8 L324 102.8 L324 104.3 L323 104.3 L323 103.3 L322 103.3 L322 102.8 L321 102.8 L321 104.8 L320 104.8 L320 104.8 L319 104.8 L319 104.3 L318 104.3 L318 104.8 L317 104.8 L317 106.3 L316 106.3 L316 95.8 L315 95.8 L315 95.8 L314 95.8 L314 95.8 L313 95.8 L313 95.8 L312 95.8 L312 95.8 L311 95.8 L311 95.8 L310 95.8 L310 95.8 L309 95.8 L309 96.8 L308 96.8 L308 97.8 L307 97.8 L307 99.8 L306 99.8 L306 99.8 L305 99.8 L305 99.3 L304 99.3 L304 99.8 L303 99.8 L303 100.3 L302 100.3 L302 100.3 L301 100.3 L301 100.3 L300 100.3 L300 101.3 L299 101.3 L299 100.8 L298 100.8 L298 101.8 L297 101.8 L297 100.3 L296 100.3 L296 101.3 L295 101.3 L295 102.3 L294 102.3 L294 102.8 L293 102.8 L293 102.3 L292 102.3 L292 101.8 L291 101.8 L291 102.3 L290 102.3 L290 106.8 L289 106.8 L289 109.3 L288 109.3 L288 106.3 L287 106.3 L287 107.3 L286 107.3 L286 103.8 L285 103.8 L285 103.8 L284 103.8 L284 102.8 L283 102.8 L283 102.8 L282 102.8 L282 98.8 L281 98.8 L281 95.8 L280 95.8 L280 95.8 L279 95.8 L279 99.3 L278 99.3 L278 101.3 L277 101.3 L277 101.8 L276 101.8 L276 102.8 L275 102.8 L275 102.3 L274 102.3 L274 103.3 L273 103.3 L273 105.8 L272 105.8 L272 105.3 L271 105.3 L271 106.3 L270 106.3 L270 103.8 L269 103.8 L269 105.3 L268 105.3 L268 103.8 L267 103.8 L267 104.3 L266 104.3 L266 102.8 L265 102.8 L265 95.8 L264 95.8 L264 95.8 L263 95.8 L263 99.8 L262 99.8 L262 101.3 L261 101.3 L261 103.3 L260 103.3 L260 104.3 L259 104.3 L259 105.3 L258 105.3 L258 103.8 L257 103.8 L257 105.3 L256 105.3 L256 105.3 L255 105.3 L255 104.8 L254 104.8 L254 104.3 L253 104.3 L253 103.3 L252 103.3 L252 102.8 L251 102.8 L251 100.8 L250 100.8 L250 95.8 L249 95.8 L249 95.8 L248 95.8 L248 95.8 L247 95.8 L247 95.8 L246 95.8 L246 96.3 L245 96.3 L245 97.8 L244 97.8 L244 98.3 L243 98.3 L243 100.3 L242 100.3 L242 99.8 L241 99.8 L241 101.3 L240 101.3 L240 100.8 L239 100.8 L239 102.8 L238 102.8 L238 103.3 L237 103.3 L237 103.8 L236 103.8 L236 103.8 L235 103.8 L235 102.3 L234 102.3 L234 102.3 L233 102.3 L233 102.3 L232 102.3 L232 103.3 L231 103.3 L231 107.3 L230 107.3 L230 110.8 L229 110.8 L229 105.8 L228 105.8 L228 106.3 L227 106.3 L227 105.8 L226 105.8 L226 104.3 L225 104.3 L225 105.3 L224 105.3 L224 103.8 L223 103.8 L223 104.8 L222 104.8 L222 97.3 L221 97.3 L221 98.3 L220 98.3 L220 98.3 L219 98.3 L219 99.8 L218 99.8 L218 99.8 L217 99.8 L217 99.8 L216 99.8 L216 100.3 L215 100.3 L215 100.3 L214 100.3 L214 101.3 L213 101.3 L213 100.3 L212 100.3 L212 101.3 L211 101.3 L211 101.8 L210 101.8 L210 101.3 L209 101.3 L209 101.8 L208 101.8 L208 102.8 L207 102.8 L207 102.3 L206 102.3 L206 102.8 L205 102.8 L205 104.3 L204 104.3 L204 101.8 L203 101.8 L203 102.3 L202 102.3 L202 101.8 L201 101.8 L201 103.3 L200 103.3 L200 95.8 L199 95.8 L199 96.8 L198 96.8 L198 100.3 L197 100.3 L197 101.8 L196 101.8 L196 104.3 L195 104.3 L195 102.8 L194 102.8 L194 104.8 L193 104.8 L193 104.3 L192 104.3 L192 103.8 L191 103.8 L191 101.8 L190 101.8 L190 103.3 L189 103.3 L189 103.3 L188 103.3 L188 101.8 L187 101.8 L187 103.8 L186 103.8 L186 102.3 L185 102.3 L185 95.8 L184 95.8 L184 95.8 L183 95.8 L183 95.8 L182 95.8 L182 95.8 L181 95.8 L181 95.8 L180 95.8 L180 95.8 L179 95.8 L179 96.3 L178 96.3 L178 96.8 L177 96.8 L177 97.8 L176 97.8 L176 97.8 L175 97.8 L175 98.8 L174 98.8 L174 98.8 L173 98.8 L173 98.3 L172 98.3 L172 99.3 L171 99.3 L171 98.8 L170 98.8 L170 99.8 L169 99.8 L169 100.3 L168 100.3 L168 100.8 L167 100.8 L167 100.3 L166 100.3 L166 102.3 L165 102.3 L165 103.3 L164 103.3 L164 103.3 L163 103.3 L163 101.3 L162 101.3 L162 102.3 L161 102.3 L161 102.3 L160 102.3 L160 102.3 L159 102.3 L159 102.3 L158 102.3 L158 102.8 L157 102.8 L157 104.3 L156 104.3 L156 102.8 L155 102.8 L155 103.8 L154 103.8 L154 101.3 L153 101.3 L153 100.8 L152 100.8 L152 100.8 L151 100.8 L151 95.8 L150 95.8 L150 95.8 L149 95.8 L149 95.8 L148 95.8 L148 99.8 L147 99.8 L147 100.3 L146 100.3 L146 102.3 L145 102.3 L145 102.8 L144 102.8 L144 102.8 L143 102.8 L143 103.8 L142 103.8 L142 102.8 L141 102.8 L141 101.8 L140 101.8 L140 103.8 L139 103.8 L139 102.3 L138 102.3 L138 103.8 L137 103.8 L137 103.8 L136 103.8 L136 102.3 L135 102.3 L135 101.3 L134 101.3 L134 95.8 L133 95.8 L133 95.8 L132 95.8 L132 99.3 L131 99.3 L131 103.8 L130 103.8 L130 101.8 L129 101.8 L129 103.8 L128 103.8 L128 104.3 L127 104.3 L127 104.8 L126 104.8 L126 102.8 L125 102.8 L125 103.8 L124 103.8 L124 102.8 L123 102.8 L123 100.8 L122 100.8 L122 101.8 L121 101.8 L121 100.3 L120 100.3 L120 95.8 L119 95.8 L119 95.8 L118 95.8 L118 95.8 L117 95.8 L117 95.8 L116 95.8 L116 95.8 L115 95.8 L115 96.8 L114 96.8 L114 98.3 L113 98.3 L113 99.3 L112 99.3 L112 100.8 L111 100.8 L111 101.8 L110 101.8 L110 101.8 L109 101.8 L109 102.3 L108 102.3 L108 104.3 L107 104.3 L107 103.8 L106 103.8 L106 102.3 L105 102.3 L105 102.8 L104 102.8 L104 101.8 L103 101.8 L103 102.3 L102 102.3 L102 105.3 L101 105.3 L101 105.8 L100 105.8 L100 105.3 L99 105.3 L99 104.8 L98 104.8 L98 103.8 L97 103.8 L97 104.8 L96 104.8 L96 101.3 L95 101.3 L95 101.3 L94 101.3 L94 102.8 L93 102.8 L93 101.3 L92 101.3 L92 102.8 L91 102.8 L91 102.3 L90 102.3 L90 103.3 L89 103.3 L89 104.3 L88 104.3 L88 101.8 L87 101.8 L87 95.8 L86 95.8 L86 95.8 L85 95.8 L85 95.8 L84 95.8 L84 96.3 L83 96.3 L83 98.3 L82 98.3 L82 99.8 L81 99.8 L81 101.3 L80 101.3 L80 101.8 L79 101.8 L79 102.3 L78 102.3 L78 102.8 L77 102.8 L77 103.8 L76 103.8 L76 105.8 L75 105.8 L75 105.3 L74 105.3 L74 107.3 L73 107.3 L73 104.8 L72 104.8 L72 104.3 L71 104.3 L71 103.3 L70 103.3 L70 101.3 L69 101.3 L69 95.8 L68 95.8 L68 95.8 L67 95.8 L67 98.8 L66 98.8 L66 102.8 L65 102.8 L65 101.8 L64 101.8 L64 103.8 L63 103.8 L63 104.3 L62 104.3 L62 102.3 L61 102.3 L61 103.3 L60 103.3 L60 104.3 L59 104.3 L59 104.8 L58 104.8 L58 106.3 L57 106.3 L57 102.8 L56 102.8 L56 102.8 L55 102.8 L55 100.8 L54 100.8 L54 95.8 L53 95.8 L53 95.8 L52 95.8 L52 95.8 L51 95.8 L51 95.8 L50 95.8Z" fill="#6f9fd9"/></svg>
<div style="left:201px;top:61px;width:1px;height:68px;background:#00f000"></div>
<div style="left:517px;top:61px;width:1px;height:68px;background:#70757a"></div>
<div class="sbb" style="left:899px;top:31px;width:16px;height:115px"></div>
<div style="left:898px;top:31px;width:1px;height:64px;background:#c4c8cc"></div>
<div style="left:915px;top:29px;width:2px;height:553px;background:#26282c"></div>
<div style="left:899px;top:48px;width:16px;height:30px;background:#262b33"></div>
<div class="thumb" style="left:899px;top:48px;width:15px;height:17px"></div>
<div class="pm" style="left:899px;top:96px;width:15px;height:15px"></div>
<div class="pm" style="left:899px;top:113px;width:15px;height:15px"></div>
<div class="sbb" style="left:2px;top:130px;width:913px;height:16px"></div>
<div style="left:19px;top:131px;width:828px;height:14px;background:#242932"></div>
<div class="thumb" style="left:19px;top:131px;width:17px;height:14px"></div>
<div class="pm" style="left:865px;top:130px;width:15px;height:15px"></div>
<div class="pm" style="left:882px;top:130px;width:15px;height:15px"></div>
<div style="left:0;top:147px;width:916px;height:3px;background:#4b4b4b"></div>
<div style="left:50px;top:181px;width:848px;height:363px;background:#eef2f7"></div>
<div style="left:50px;top:203px;width:848px;height:20px;background:#c5cbd2"></div>
<div style="left:50px;top:263px;width:848px;height:20px;background:#c5cbd2"></div>
<div style="left:50px;top:303px;width:848px;height:20px;background:#c5cbd2"></div>
<div style="left:50px;top:343px;width:848px;height:20px;background:#c5cbd2"></div>
<div style="left:50px;top:403px;width:848px;height:20px;background:#c5cbd2"></div>
<div style="left:50px;top:443px;width:848px;height:20px;background:#c5cbd2"></div>
<div style="left:50px;top:503px;width:848px;height:20px;background:#c5cbd2"></div>
<div style="left:50px;top:181px;width:848px;height:3px;background:#b6bcc4"></div>
<div style="left:2px;top:181px;width:47px;height:363px;background:#fff"></div>
<div style="left:2px;top:180px;width:896px;height:1px;background:#d8dadd"></div>
<div style="left:2px;top:181px;width:30px;height:2px;background:#000"></div>
<div style="left:2px;top:210px;width:47px;height:1px;background:#000"></div>
<div style="left:2px;top:243px;width:47px;height:1px;background:#000"></div>
<div style="left:2px;top:278px;width:47px;height:1px;background:#000"></div>
<div style="left:2px;top:313px;width:47px;height:1px;background:#000"></div>
<div style="left:2px;top:348px;width:47px;height:1px;background:#000"></div>
<div style="left:2px;top:383px;width:47px;height:1px;background:#000"></div>
<div style="left:2px;top:416px;width:47px;height:1px;background:#000"></div>
<div style="left:2px;top:450px;width:47px;height:1px;background:#000"></div>
<div style="left:2px;top:483px;width:47px;height:1px;background:#000"></div>
<div style="left:2px;top:518px;width:47px;height:1px;background:#000"></div>
<div style="left:2px;top:503px;width:30px;height:20px;background:#000"></div>
<div style="left:2px;top:203px;width:30px;height:20px;background:#000"></div>
<div style="left:2px;top:263px;width:30px;height:20px;background:#000"></div>
<div style="left:2px;top:303px;width:30px;height:20px;background:#000"></div>
<div style="left:2px;top:343px;width:30px;height:20px;background:#000"></div>
<div style="left:2px;top:403px;width:30px;height:20px;background:#000"></div>
<div style="left:2px;top:443px;width:30px;height:20px;background:#000"></div>
<div class="kl" style="top:189px">D5</div>
<div class="kl" style="top:229px">C5</div>
<div class="kl" style="top:249px">B4</div>
<div class="kl" style="top:289px">A4</div>
<div class="kl" style="top:329px">G4</div>
<div class="kl" style="top:369px">F4</div>
<div class="kl" style="top:389px">E4</div>
<div class="kl" style="top:429px">D4</div>
<div class="kl" style="top:469px">C4</div>
<div class="kl" style="top:489px">B3</div>
<div class="kl" style="top:529px">A3</div>
<div style="left:49px;top:151px;width:1px;height:30px;background:#e0e0e0"></div>
<div style="left:49px;top:181px;width:1px;height:363px;background:#101010"></div>
<div style="left:78px;top:171px;width:1px;height:9px;background:#e8e8e8"></div>
<div style="left:143px;top:171px;width:1px;height:9px;background:#e8e8e8"></div>
<div style="left:209px;top:161px;width:1px;height:19px;background:#e8e8e8"></div><div class="rl" style="left:211.5px;top:162px">13</div>
<div style="left:274px;top:171px;width:1px;height:9px;background:#e8e8e8"></div>
<div style="left:340px;top:171px;width:1px;height:9px;background:#e8e8e8"></div>
<div style="left:405px;top:171px;width:1px;height:9px;background:#e8e8e8"></div>
<div style="left:471px;top:161px;width:1px;height:19px;background:#e8e8e8"></div><div class="rl" style="left:473.5px;top:162px">14</div>
<div style="left:536px;top:171px;width:1px;height:9px;background:#e8e8e8"></div>
<div style="left:601px;top:171px;width:1px;height:9px;background:#e8e8e8"></div>
<div style="left:667px;top:171px;width:1px;height:9px;background:#e8e8e8"></div>
<div style="left:732px;top:161px;width:1px;height:19px;background:#e8e8e8"></div><div class="rl" style="left:734.5px;top:162px">15</div>
<div style="left:798px;top:171px;width:1px;height:9px;background:#e8e8e8"></div>
<div style="left:863px;top:171px;width:1px;height:9px;background:#e8e8e8"></div>
<svg style="left:0;top:0;width:1191px;height:582px" viewBox="0 0 1191 582"><path d="M50 324.5 L51 324.5 L51 326.0 L52 326.0 L52 326.5 L53 326.5 L53 322.5 L54 322.5 L54 324.0 L55 324.0 L55 326.0 L56 326.0 L56 323.0 L57 323.0 L57 323.0 L58 323.0 L58 325.0 L59 325.0 L59 323.5 L60 323.5 L60 323.0 L61 323.0 L61 324.5 L62 324.5 L62 325.5 L63 325.5 L63 323.5 L64 323.5 L64 324.5 L65 324.5 L65 325.5 L66 325.5 L66 325.5 L67 325.5 L67 326.0 L68 326.0 L68 323.5 L69 323.5 L69 326.0 L70 326.0 L70 327.5 L71 327.5 L71 323.5 L72 323.5 L72 325.0 L73 325.0 L73 325.0 L74 325.0 L74 326.5 L75 326.5 L75 327.0 L76 327.0 L76 327.0 L77 327.0 L77 325.0 L78 325.0 L78 325.0 L79 325.0 L79 324.0 L80 324.0 L80 324.5 L81 324.5 L81 324.0 L82 324.0 L82 326.5 L83 326.5 L83 324.0 L84 324.0 L84 343.5 L85 343.5 L85 351.0 L86 351.0 L86 350.5 L87 350.5 L87 351.0 L88 351.0 L88 343.0 L89 343.0 L89 325.0 L90 325.0 L90 324.5 L91 324.5 L91 326.5 L92 326.5 L92 325.5 L93 325.5 L93 326.0 L94 326.0 L94 325.5 L95 325.5 L95 324.5 L96 324.5 L96 326.0 L97 326.0 L97 326.0 L98 326.0 L98 328.0 L99 328.0 L99 328.0 L100 328.0 L100 328.0 L101 328.0 L101 325.0 L102 325.0 L102 325.5 L103 325.5 L103 325.5 L104 325.5 L104 327.5 L105 327.5 L105 327.0 L106 327.0 L106 327.0 L107 327.0 L107 328.0 L108 328.0 L108 327.0 L109 327.0 L109 330.5 L110 330.5 L110 330.0 L111 330.0 L111 327.0 L112 327.0 L112 330.5 L113 330.5 L113 330.0 L114 330.0 L114 328.5 L115 328.5 L115 329.5 L116 329.5 L116 328.5 L117 328.5 L117 330.5 L118 330.5 L118 328.0 L119 328.0 L119 329.0 L120 329.0 L120 328.0 L121 328.0 L121 327.5 L122 327.5 L122 328.0 L123 328.0 L123 327.5 L124 327.5 L124 330.5 L125 330.5 L125 329.0 L126 329.0 L126 328.5 L127 328.5 L127 328.0 L128 328.0 L128 331.0 L129 331.0 L129 329.5 L130 329.5 L130 329.5 L131 329.5 L131 329.5 L132 329.5 L132 329.0 L133 329.0 L133 331.0 L134 331.0 L134 328.0 L135 328.0 L135 329.5 L136 329.5 L136 328.0 L137 328.0 L137 329.0 L138 329.0 L138 343.5 L139 343.5 L139 343.5 L140 343.5 L140 344.5 L141 344.5 L141 345.5 L142 345.5 L142 347.0 L143 347.0 L143 347.0 L144 347.0 L144 348.0 L145 348.0 L145 348.0 L146 348.0 L146 348.5 L147 348.5 L147 352.5 L148 352.5 L148 355.5 L149 355.5 L149 359.0 L150 359.0 L150 362.0 L151 362.0 L151 362.0 L152 362.0 L152 362.0 L153 362.0 L153 362.0 L154 362.0 L154 362.0 L155 362.0 L155 362.0 L156 362.0 L156 362.0 L157 362.0 L157 362.0 L158 362.0 L158 362.0 L159 362.0 L159 362.0 L160 362.0 L160 362.0 L161 362.0 L161 362.0 L162 362.0 L162 362.0 L163 362.0 L163 362.0 L164 362.0 L164 362.0 L165 362.0 L165 362.0 L166 362.0 L166 362.0 L167 362.0 L167 362.0 L168 362.0 L168 362.0 L169 362.0 L169 362.0 L170 362.0 L170 362.0 L171 362.0 L171 362.5 L172 362.5 L172 362.5 L173 362.5 L173 362.5 L174 362.5 L174 362.5 L175 362.5 L175 362.5 L176 362.5 L176 362.5 L177 362.5 L177 362.5 L178 362.5 L178 362.5 L179 362.5 L179 362.5 L180 362.5 L180 362.5 L181 362.5 L181 362.5 L182 362.5 L182 362.5 L183 362.5 L183 359.0 L184 359.0 L184 355.5 L185 355.5 L185 354.0 L186 354.0 L186 334.5 L187 334.5 L187 313.5 L188 313.5 L188 316.0 L189 316.0 L189 313.0 L190 313.0 L190 311.0 L191 311.0 L191 316.5 L192 316.5 L192 316.0 L193 316.0 L193 317.0 L194 317.0 L194 318.5 L195 318.5 L195 315.0 L196 315.0 L196 319.0 L197 319.0 L197 319.0 L198 319.0 L198 320.5 L199 320.5 L199 322.0 L200 322.0 L200 321.0 L201 321.0 L201 321.0 L202 321.0 L202 322.0 L203 322.0 L203 317.5 L204 317.5 L204 320.0 L205 320.0 L205 324.0 L206 324.0 L206 332.0 L207 332.0 L207 335.5 L208 335.5 L208 337.5 L209 337.5 L209 342.5 L210 342.5 L210 345.0 L211 345.0 L211 348.0 L212 348.0 L212 349.0 L213 349.0 L213 344.5 L214 344.5 L214 341.0 L215 341.0 L215 338.0 L216 338.0 L216 335.5 L217 335.5 L217 331.5 L218 331.5 L218 324.5 L219 324.5 L219 318.0 L220 318.0 L220 319.0 L221 319.0 L221 319.0 L222 319.0 L222 316.5 L223 316.5 L223 316.5 L224 316.5 L224 317.5 L225 317.5 L225 315.5 L226 315.5 L226 316.0 L227 316.0 L227 316.5 L228 316.5 L228 319.5 L229 319.5 L229 317.0 L230 317.0 L230 317.5 L231 317.5 L231 317.0 L232 317.0 L232 316.0 L233 316.0 L233 317.0 L234 317.0 L234 320.0 L235 320.0 L235 320.0 L236 320.0 L236 319.5 L237 319.5 L237 316.5 L238 316.5 L238 317.5 L239 317.5 L239 316.5 L240 316.5 L240 320.5 L241 320.5 L241 319.0 L242 319.0 L242 319.0 L243 319.0 L243 320.0 L244 320.0 L244 316.0 L245 316.0 L245 320.5 L246 320.5 L246 320.0 L247 320.0 L247 316.0 L248 316.0 L248 315.5 L249 315.5 L249 318.5 L250 318.5 L250 317.5 L251 317.5 L251 318.5 L252 318.5 L252 315.5 L253 315.5 L253 316.5 L254 316.5 L254 314.5 L255 314.5 L255 318.5 L256 318.5 L256 315.5 L257 315.5 L257 318.5 L258 318.5 L258 316.0 L259 316.0 L259 317.5 L260 317.5 L260 315.0 L261 315.0 L261 314.0 L262 314.0 L262 313.5 L263 313.5 L263 316.0 L264 316.0 L264 314.0 L265 314.0 L265 316.0 L266 316.0 L266 313.5 L267 313.5 L267 314.5 L268 314.5 L268 319.0 L269 319.0 L269 315.5 L270 315.5 L270 315.5 L271 315.5 L271 318.0 L272 318.0 L272 318.5 L273 318.5 L273 333.0 L274 333.0 L274 351.0 L275 351.0 L275 351.5 L276 351.5 L276 352.0 L277 352.0 L277 354.0 L278 354.0 L278 355.5 L279 355.5 L279 352.0 L280 352.0 L280 344.0 L281 344.0 L281 339.0 L282 339.0 L282 330.5 L283 330.5 L283 326.5 L284 326.5 L284 326.0 L285 326.0 L285 324.5 L286 324.5 L286 326.5 L287 326.5 L287 322.0 L288 322.0 L288 324.5 L289 324.5 L289 325.0 L290 325.0 L290 322.5 L291 322.5 L291 321.0 L292 321.0 L292 324.5 L293 324.5 L293 321.0 L294 321.0 L294 325.0 L295 325.0 L295 325.0 L296 325.0 L296 323.5 L297 323.5 L297 324.0 L298 324.0 L298 323.0 L299 323.0 L299 323.5 L300 323.5 L300 324.0 L301 324.0 L301 320.5 L302 320.5 L302 322.0 L303 322.0 L303 321.0 L304 321.0 L304 325.5 L305 325.5 L305 324.5 L306 324.5 L306 325.5 L307 325.5 L307 322.5 L308 322.5 L308 323.5 L309 323.5 L309 326.0 L310 326.0 L310 323.0 L311 323.0 L311 326.0 L312 326.0 L312 324.5 L313 324.5 L313 325.0 L314 325.0 L314 323.0 L315 323.0 L315 324.5 L316 324.5 L316 327.0 L317 327.0 L317 326.0 L318 326.0 L318 326.0 L319 326.0 L319 325.0 L320 325.0 L320 325.5 L321 325.5 L321 318.5 L322 318.5 L322 318.0 L323 318.0 L323 315.0 L324 315.0 L324 311.5 L325 311.5 L325 311.5 L326 311.5 L326 313.0 L327 313.0 L327 316.0 L328 316.0 L328 322.0 L329 322.0 L329 323.0 L330 323.0 L330 320.5 L331 320.5 L331 321.0 L332 321.0 L332 325.5 L333 325.5 L333 326.0 L334 326.0 L334 323.5 L335 323.5 L335 323.5 L336 323.5 L336 325.5 L337 325.5 L337 326.0 L338 326.0 L338 325.0 L339 325.0 L339 327.0 L340 327.0 L340 324.0 L341 324.0 L341 326.5 L342 326.5 L342 327.0 L343 327.0 L343 327.0 L344 327.0 L344 349.0 L345 349.0 L345 360.0 L346 360.0 L346 360.0 L347 360.0 L347 353.0 L348 353.0 L348 337.0 L349 337.0 L349 330.5 L350 330.5 L350 325.0 L351 325.0 L351 323.5 L352 323.5 L352 317.5 L353 317.5 L353 313.0 L354 313.0 L354 316.5 L355 316.5 L355 314.0 L356 314.0 L356 313.5 L357 313.5 L357 316.0 L358 316.0 L358 321.0 L359 321.0 L359 319.0 L360 319.0 L360 319.0 L361 319.0 L361 320.0 L362 320.0 L362 321.5 L363 321.5 L363 319.5 L364 319.5 L364 320.5 L365 320.5 L365 322.0 L366 322.0 L366 319.5 L367 319.5 L367 322.5 L368 322.5 L368 321.5 L369 321.5 L369 324.0 L370 324.0 L370 323.0 L371 323.0 L371 323.0 L372 323.0 L372 324.5 L373 324.5 L373 322.0 L374 322.0 L374 325.5 L375 325.5 L375 322.5 L376 322.5 L376 324.5 L377 324.5 L377 326.5 L378 326.5 L378 326.0 L379 326.0 L379 323.0 L380 323.0 L380 324.0 L381 324.0 L381 326.5 L382 326.5 L382 327.0 L383 327.0 L383 324.0 L384 324.0 L384 326.0 L385 326.0 L385 326.5 L386 326.5 L386 327.5 L387 327.5 L387 326.0 L388 326.0 L388 325.0 L389 325.0 L389 328.5 L390 328.5 L390 327.0 L391 327.0 L391 328.5 L392 328.5 L392 328.0 L393 328.0 L393 329.5 L394 329.5 L394 332.0 L395 332.0 L395 330.5 L396 330.5 L396 330.5 L397 330.5 L397 334.5 L398 334.5 L398 334.0 L399 334.0 L399 335.5 L400 335.5 L400 334.0 L401 334.0 L401 336.0 L402 336.0 L402 337.0 L403 337.0 L403 339.5 L404 339.5 L404 344.0 L405 344.0 L405 347.5 L406 347.5 L406 349.0 L407 349.0 L407 346.5 L408 346.5 L408 346.5 L409 346.5 L409 344.0 L410 344.0 L410 343.0 L411 343.0 L411 342.0 L412 342.0 L412 341.0 L413 341.0 L413 340.0 L414 340.0 L414 342.5 L415 342.5 L415 344.5 L416 344.5 L416 346.0 L417 346.0 L417 346.0 L418 346.0 L418 346.0 L419 346.0 L419 346.0 L420 346.0 L420 346.0 L421 346.0 L421 347.0 L422 347.0 L422 347.0 L423 347.0 L423 347.0 L424 347.0 L424 347.5 L425 347.5 L425 347.5 L426 347.5 L426 346.0 L427 346.0 L427 347.5 L428 347.5 L428 347.5 L429 347.5 L429 346.5 L430 346.5 L430 347.0 L431 347.0 L431 347.5 L432 347.5 L432 347.5 L433 347.5 L433 347.5 L434 347.5 L434 346.5 L435 346.5 L435 347.0 L436 347.0 L436 347.5 L437 347.5 L437 347.0 L438 347.0 L438 346.5 L439 346.5 L439 348.0 L440 348.0 L440 346.5 L441 346.5 L441 347.0 L442 347.0 L442 346.5 L443 346.5 L443 347.5 L444 347.5 L444 347.0 L445 347.0 L445 347.0 L446 347.0 L446 347.5 L447 347.5 L447 346.5 L448 346.5 L448 346.5 L449 346.5 L449 346.0 L450 346.0 L450 346.5 L451 346.5 L451 345.5 L452 345.5 L452 346.5 L453 346.5 L453 346.5 L454 346.5 L454 346.5 L455 346.5 L455 346.5 L456 346.5 L456 346.0 L457 346.0 L457 346.0 L458 346.0 L458 347.0 L459 347.0 L459 347.5 L460 347.5 L460 347.0 L461 347.0 L461 346.0 L462 346.0 L462 346.5 L463 346.5 L463 347.0 L464 347.0 L464 348.0 L465 348.0 L465 348.0 L466 348.0 L466 352.5 L467 352.5 L467 358.5 L468 358.5 L468 358.0 L469 358.0 L469 358.5 L470 358.5 L470 358.5 L471 358.5 L471 358.5 L472 358.5 L472 358.5 L473 358.5 L473 359.0 L474 359.0 L474 359.0 L475 359.0 L475 358.5 L476 358.5 L476 359.0 L477 359.0 L477 359.0 L478 359.0 L478 354.5 L479 354.5 L479 345.0 L480 345.0 L480 339.0 L481 339.0 L481 336.5 L482 336.5 L482 336.0 L483 336.0 L483 338.5 L484 338.5 L484 338.5 L485 338.5 L485 339.0 L486 339.0 L486 340.5 L487 340.5 L487 341.0 L488 341.0 L488 340.5 L489 340.5 L489 339.5 L490 339.5 L490 338.5 L491 338.5 L491 338.5 L492 338.5 L492 337.0 L493 337.0 L493 338.0 L494 338.0 L494 336.0 L495 336.0 L495 336.5 L496 336.5 L496 338.5 L497 338.5 L497 339.0 L498 339.0 L498 337.5 L499 337.5 L499 339.5 L500 339.5 L500 339.5 L501 339.5 L501 341.0 L502 341.0 L502 340.0 L503 340.0 L503 341.5 L504 341.5 L504 343.0 L505 343.0 L505 342.0 L506 342.0 L506 342.5 L507 342.5 L507 343.5 L508 343.5 L508 343.5 L509 343.5 L509 345.5 L510 345.5 L510 346.5 L511 346.5 L511 345.5 L512 345.5 L512 347.5 L513 347.5 L513 349.5 L514 349.5 L514 351.0 L515 351.0 L515 354.0 L516 354.0 L516 355.0 L517 355.0 L517 357.0 L518 357.0 L518 357.5 L519 357.5 L519 357.5 L520 357.5 L520 357.5 L521 357.5 L521 357.0 L522 357.0 L522 357.5 L523 357.5 L523 357.5 L524 357.5 L524 357.5 L525 357.5 L525 357.0 L526 357.0 L526 357.5 L527 357.5 L527 357.0 L528 357.0 L528 357.5 L529 357.5 L529 357.5 L530 357.5 L530 357.5 L531 357.5 L531 357.5 L532 357.5 L532 357.5 L533 357.5 L533 357.5 L534 357.5 L534 357.0 L535 357.0 L535 357.5 L536 357.5 L536 357.0 L537 357.0 L537 357.0 L538 357.0 L538 357.0 L539 357.0 L539 357.0 L540 357.0 L540 357.0 L541 357.0 L541 352.5 L542 352.5 L542 345.5 L543 345.5 L543 335.0 L544 335.0 L544 326.0 L545 326.0 L545 316.5 L546 316.5 L546 315.0 L547 315.0 L547 311.5 L548 311.5 L548 302.5 L549 302.5 L549 301.5 L550 301.5 L550 303.0 L551 303.0 L551 310.0 L552 310.0 L552 306.5 L553 306.5 L553 311.5 L554 311.5 L554 307.5 L555 307.5 L555 308.5 L556 308.5 L556 311.5 L557 311.5 L557 308.0 L558 308.0 L558 310.5 L559 310.5 L559 313.5 L560 313.5 L560 308.0 L561 308.0 L561 311.0 L562 311.0 L562 308.5 L563 308.5 L563 313.5 L564 313.5 L564 312.0 L565 312.0 L565 313.0 L566 313.0 L566 311.0 L567 311.0 L567 311.5 L568 311.5 L568 311.0 L569 311.0 L569 310.5 L570 310.5 L570 314.5 L571 314.5 L571 314.5 L572 314.5 L572 311.0 L573 311.0 L573 312.0 L574 312.0 L574 315.5 L575 315.5 L575 313.5 L576 313.5 L576 316.0 L577 316.0 L577 315.0 L578 315.0 L578 318.5 L579 318.5 L579 320.5 L580 320.5 L580 318.5 L581 318.5 L581 319.5 L582 319.5 L582 322.0 L583 322.0 L583 320.0 L584 320.0 L584 323.0 L585 323.0 L585 322.5 L586 322.5 L586 323.5 L587 323.5 L587 323.5 L588 323.5 L588 325.5 L589 325.5 L589 325.0 L590 325.0 L590 326.5 L591 326.5 L591 326.0 L592 326.0 L592 327.0 L593 327.0 L593 327.0 L594 327.0 L594 328.0 L595 328.0 L595 331.0 L596 331.0 L596 332.5 L597 332.5 L597 333.0 L598 333.0 L598 331.5 L599 331.5 L599 333.0 L600 333.0 L600 345.5 L601 345.5 L601 356.0 L602 356.0 L602 356.0 L603 356.0 L603 356.5 L604 356.5 L604 357.0 L605 357.0 L605 350.5 L606 350.5 L606 342.0 L607 342.0 L607 338.5 L608 338.5 L608 331.5 L609 331.5 L609 331.5 L610 331.5 L610 330.0 L611 330.0 L611 327.5 L612 327.5 L612 326.5 L613 326.5 L613 324.0 L614 324.0 L614 322.0 L615 322.0 L615 320.5 L616 320.5 L616 319.5 L617 319.5 L617 321.0 L618 321.0 L618 317.0 L619 317.0 L619 318.5 L620 318.5 L620 317.0 L621 317.0 L621 315.0 L622 315.0 L622 313.5 L623 313.5 L623 313.5 L624 313.5 L624 316.0 L625 316.0 L625 313.5 L626 313.5 L626 314.5 L627 314.5 L627 314.0 L628 314.0 L628 312.5 L629 312.5 L629 312.0 L630 312.0 L630 312.5 L631 312.5 L631 311.5 L632 311.5 L632 313.5 L633 313.5 L633 313.0 L634 313.0 L634 310.5 L635 310.5 L635 308.0 L636 308.0 L636 308.5 L637 308.5 L637 304.5 L638 304.5 L638 300.5 L639 300.5 L639 297.5 L640 297.5 L640 298.0 L641 298.0 L641 300.5 L642 300.5 L642 304.5 L643 304.5 L643 303.0 L644 303.0 L644 306.0 L645 306.0 L645 310.0 L646 310.0 L646 308.0 L647 308.0 L647 308.0 L648 308.0 L648 303.0 L649 303.0 L649 301.0 L650 301.0 L650 299.0 L651 299.0 L651 297.5 L652 297.5 L652 292.5 L653 292.5 L653 291.0 L654 291.0 L654 298.5 L655 298.5 L655 294.5 L656 294.5 L656 299.0 L657 299.0 L657 303.5 L658 303.5 L658 301.5 L659 301.5 L659 299.5 L660 299.5 L660 300.0 L661 300.0 L661 295.0 L662 295.0 L662 294.5 L663 294.5 L663 288.5 L664 288.5 L664 281.5 L665 281.5 L665 273.0 L666 273.0 L666 265.0 L667 265.0 L667 274.5 L668 274.5 L668 285.0 L669 285.0 L669 292.0 L670 292.0 L670 305.5 L671 305.5 L671 314.5 L672 314.5 L672 318.5 L673 318.5 L673 322.0 L674 322.0 L674 321.5 L675 321.5 L675 323.5 L676 323.5 L676 325.5 L677 325.5 L677 324.5 L678 324.5 L678 323.5 L679 323.5 L679 325.5 L680 325.5 L680 325.0 L681 325.0 L681 325.5 L682 325.5 L682 326.5 L683 326.5 L683 327.0 L684 327.0 L684 326.5 L685 326.5 L685 328.5 L686 328.5 L686 329.5 L687 329.5 L687 329.0 L688 329.0 L688 328.5 L689 328.5 L689 326.5 L690 326.5 L690 327.0 L691 327.0 L691 328.5 L692 328.5 L692 327.5 L693 327.5 L693 329.0 L694 329.0 L694 328.5 L695 328.5 L695 327.0 L696 327.0 L696 325.0 L697 325.0 L697 327.5 L698 327.5 L698 326.5 L699 326.5 L699 323.5 L700 323.5 L700 322.5 L701 322.5 L701 326.5 L702 326.5 L702 327.5 L703 327.5 L703 326.0 L704 326.0 L704 325.5 L705 325.5 L705 328.5 L706 328.5 L706 327.5 L707 327.5 L707 330.0 L708 330.0 L708 331.5 L709 331.5 L709 329.5 L710 329.5 L710 333.0 L711 333.0 L711 333.5 L712 333.5 L712 334.0 L713 334.0 L713 334.0 L714 334.0 L714 333.0 L715 333.0 L715 336.5 L716 336.5 L716 336.0 L717 336.0 L717 335.0 L718 335.0 L718 336.0 L719 336.0 L719 337.0 L720 337.0 L720 335.5 L721 335.5 L721 337.5 L722 337.5 L722 336.0 L723 336.0 L723 336.5 L724 336.5 L724 335.0 L725 335.0 L725 334.0 L726 334.0 L726 335.0 L727 335.0 L727 334.0 L728 334.0 L728 335.0 L729 335.0 L729 334.5 L730 334.5 L730 331.5 L731 331.5 L731 332.0 L732 332.0 L732 333.0 L733 333.0 L733 341.5 L734 341.5 L734 349.5 L735 349.5 L735 353.0 L736 353.0 L736 355.0 L737 355.0 L737 348.5 L738 348.5 L738 327.0 L739 327.0 L739 315.5 L740 315.5 L740 314.5 L741 314.5 L741 316.5 L742 316.5 L742 316.0 L743 316.0 L743 318.5 L744 318.5 L744 317.0 L745 317.0 L745 321.5 L746 321.5 L746 320.5 L747 320.5 L747 321.0 L748 321.0 L748 320.0 L749 320.0 L749 320.5 L750 320.5 L750 321.0 L751 321.0 L751 319.0 L752 319.0 L752 322.5 L753 322.5 L753 321.0 L754 321.0 L754 321.0 L755 321.0 L755 320.5 L756 320.5 L756 322.5 L757 322.5 L757 322.5 L758 322.5 L758 323.5 L759 323.5 L759 322.5 L760 322.5 L760 322.5 L761 322.5 L761 321.5 L762 321.5 L762 319.5 L763 319.5 L763 319.5 L764 319.5 L764 320.0 L765 320.0 L765 322.5 L766 322.5 L766 321.0 L767 321.0 L767 318.5 L768 318.5 L768 322.0 L769 322.0 L769 319.0 L770 319.0 L770 322.5 L771 322.5 L771 320.0 L772 320.0 L772 320.0 L773 320.0 L773 319.0 L774 319.0 L774 319.5 L775 319.5 L775 319.0 L776 319.0 L776 320.0 L777 320.0 L777 318.5 L778 318.5 L778 318.0 L779 318.0 L779 318.0 L780 318.0 L780 322.0 L781 322.0 L781 318.0 L782 318.0 L782 321.5 L783 321.5 L783 321.5 L784 321.5 L784 321.0 L785 321.0 L785 320.0 L786 320.0 L786 322.0 L787 322.0 L787 323.0 L788 323.0 L788 321.5 L789 321.5 L789 319.0 L790 319.0 L790 321.5 L791 321.5 L791 323.0 L792 323.0 L792 320.5 L793 320.5 L793 320.0 L794 320.0 L794 322.5 L795 322.5 L795 323.5 L796 323.5 L796 321.5 L797 321.5 L797 321.0 L798 321.0 L798 324.5 L799 324.5 L799 321.0 L800 321.0 L800 323.5 L801 323.5 L801 324.5 L802 324.5 L802 322.5 L803 322.5 L803 324.0 L804 324.0 L804 321.5 L805 321.5 L805 325.0 L806 325.0 L806 322.0 L807 322.0 L807 324.5 L808 324.5 L808 326.0 L809 326.0 L809 325.5 L810 325.5 L810 323.5 L811 323.5 L811 323.5 L812 323.5 L812 324.0 L813 324.0 L813 326.0 L814 326.0 L814 326.0 L815 326.0 L815 325.0 L816 325.0 L816 325.0 L817 325.0 L817 326.5 L818 326.5 L818 326.5 L819 326.5 L819 327.0 L820 327.0 L820 328.5 L821 328.5 L821 327.5 L822 327.5 L822 329.5 L823 329.5 L823 329.0 L824 329.0 L824 327.0 L825 327.0 L825 330.5 L826 330.5 L826 327.5 L827 327.5 L827 328.0 L828 328.0 L828 328.5 L829 328.5 L829 329.0 L830 329.0 L830 330.5 L831 330.5 L831 331.5 L832 331.5 L832 332.0 L833 332.0 L833 330.5 L834 330.5 L834 331.0 L835 331.0 L835 333.0 L836 333.0 L836 333.5 L837 333.5 L837 331.0 L838 331.0 L838 332.5 L839 332.5 L839 332.5 L840 332.5 L840 332.5 L841 332.5 L841 332.5 L842 332.5 L842 332.5 L843 332.5 L843 333.5 L844 333.5 L844 335.0 L845 335.0 L845 335.5 L846 335.5 L846 334.5 L847 334.5 L847 336.0 L848 336.0 L848 337.0 L849 337.0 L849 335.5 L850 335.5 L850 336.0 L851 336.0 L851 336.5 L852 336.5 L852 336.5 L853 336.5 L853 338.5 L854 338.5 L854 337.5 L855 337.5 L855 340.0 L856 340.0 L856 338.5 L857 338.5 L857 340.5 L858 340.5 L858 339.5 L859 339.5 L859 339.5 L860 339.5 L860 340.5 L861 340.5 L861 339.5 L862 339.5 L862 339.5 L863 339.5 L863 340.0 L864 340.0 L864 340.0 L865 340.0 L865 340.5 L866 340.5 L866 341.5 L867 341.5 L867 342.5 L868 342.5 L868 341.5 L869 341.5 L869 342.5 L870 342.5 L870 341.0 L871 341.0 L871 342.0 L872 342.0 L872 342.0 L873 342.0 L873 341.5 L874 341.5 L874 341.5 L875 341.5 L875 341.5 L876 341.5 L876 343.0 L877 343.0 L877 342.0 L878 342.0 L878 343.0 L879 343.0 L879 344.0 L880 344.0 L880 343.5 L881 343.5 L881 343.0 L882 343.0 L882 343.5 L883 343.5 L883 344.5 L884 344.5 L884 344.5 L885 344.5 L885 345.0 L886 345.0 L886 343.5 L887 343.5 L887 345.0 L888 345.0 L888 345.0 L889 345.0 L889 345.0 L890 345.0 L890 345.0 L891 345.0 L891 344.0 L892 344.0 L892 344.5 L893 344.5 L893 346.0 L894 346.0 L894 345.5 L895 345.5 L895 346.5 L896 346.5 L896 346.5 L897 346.5 L897 345.0 L898 345.0 L898 380.0 L897 380.0 L897 381.0 L896 381.0 L896 380.5 L895 380.5 L895 380.0 L894 380.0 L894 381.0 L893 381.0 L893 380.0 L892 380.0 L892 380.5 L891 380.5 L891 381.5 L890 381.5 L890 380.0 L889 380.0 L889 382.5 L888 382.5 L888 381.0 L887 381.0 L887 381.0 L886 381.0 L886 382.5 L885 382.5 L885 382.0 L884 382.0 L884 382.0 L883 382.0 L883 382.0 L882 382.0 L882 383.0 L881 383.0 L881 382.0 L880 382.0 L880 382.0 L879 382.0 L879 382.5 L878 382.5 L878 383.0 L877 383.0 L877 384.0 L876 384.0 L876 383.0 L875 383.0 L875 384.5 L874 384.5 L874 382.5 L873 382.5 L873 384.5 L872 384.5 L872 384.0 L871 384.0 L871 385.0 L870 385.0 L870 385.5 L869 385.5 L869 385.5 L868 385.5 L868 384.0 L867 384.0 L867 384.0 L866 384.0 L866 385.0 L865 385.0 L865 385.0 L864 385.0 L864 385.5 L863 385.5 L863 385.5 L862 385.5 L862 386.5 L861 386.5 L861 385.5 L860 385.5 L860 384.5 L859 384.5 L859 386.0 L858 386.0 L858 386.0 L857 386.0 L857 386.0 L856 386.0 L856 386.5 L855 386.5 L855 387.5 L854 387.5 L854 385.5 L853 385.5 L853 386.5 L852 386.5 L852 387.0 L851 387.0 L851 386.5 L850 386.5 L850 387.0 L849 387.0 L849 386.5 L848 386.5 L848 387.0 L847 387.0 L847 387.0 L846 387.0 L846 388.5 L845 388.5 L845 387.5 L844 387.5 L844 388.5 L843 388.5 L843 389.5 L842 389.5 L842 388.5 L841 388.5 L841 388.5 L840 388.5 L840 390.0 L839 390.0 L839 388.0 L838 388.0 L838 388.5 L837 388.5 L837 389.5 L836 389.5 L836 388.5 L835 388.5 L835 390.0 L834 390.0 L834 391.0 L833 391.0 L833 391.0 L832 391.0 L832 390.5 L831 390.5 L831 389.5 L830 389.5 L830 390.0 L829 390.0 L829 389.5 L828 389.5 L828 391.5 L827 391.5 L827 389.0 L826 389.0 L826 390.0 L825 390.0 L825 391.5 L824 391.5 L824 391.0 L823 391.0 L823 390.0 L822 390.0 L822 391.5 L821 391.5 L821 392.5 L820 392.5 L820 392.0 L819 392.0 L819 390.5 L818 390.5 L818 392.0 L817 392.0 L817 391.5 L816 391.5 L816 390.5 L815 390.5 L815 393.5 L814 393.5 L814 393.5 L813 393.5 L813 392.5 L812 392.5 L812 391.0 L811 391.0 L811 393.5 L810 393.5 L810 392.0 L809 392.0 L809 393.0 L808 393.0 L808 392.5 L807 392.5 L807 391.5 L806 391.5 L806 392.5 L805 392.5 L805 394.0 L804 394.0 L804 394.0 L803 394.0 L803 394.5 L802 394.5 L802 392.5 L801 392.5 L801 393.0 L800 393.0 L800 394.5 L799 394.5 L799 394.0 L798 394.0 L798 395.0 L797 395.0 L797 392.5 L796 392.5 L796 394.5 L795 394.5 L795 393.0 L794 393.0 L794 395.0 L793 395.0 L793 395.0 L792 395.0 L792 394.5 L791 394.5 L791 393.5 L790 393.5 L790 394.0 L789 394.0 L789 393.0 L788 393.0 L788 393.0 L787 393.0 L787 394.5 L786 394.5 L786 393.0 L785 393.0 L785 396.0 L784 396.0 L784 396.0 L783 396.0 L783 396.0 L782 396.0 L782 394.0 L781 394.0 L781 394.5 L780 394.5 L780 396.0 L779 396.0 L779 393.5 L778 393.5 L778 393.5 L777 393.5 L777 395.0 L776 395.0 L776 394.5 L775 394.5 L775 393.0 L774 393.0 L774 395.5 L773 395.5 L773 395.0 L772 395.0 L772 396.5 L771 396.5 L771 395.0 L770 395.0 L770 394.5 L769 394.5 L769 396.0 L768 396.0 L768 394.0 L767 394.0 L767 395.5 L766 395.5 L766 395.0 L765 395.0 L765 397.0 L764 397.0 L764 396.0 L763 396.0 L763 394.5 L762 394.5 L762 396.0 L761 396.0 L761 396.5 L760 396.5 L760 394.5 L759 394.5 L759 395.5 L758 395.5 L758 394.0 L757 394.0 L757 396.0 L756 396.0 L756 396.5 L755 396.5 L755 394.5 L754 394.5 L754 396.5 L753 396.5 L753 397.0 L752 397.0 L752 397.0 L751 397.0 L751 398.0 L750 398.0 L750 396.0 L749 396.0 L749 397.5 L748 397.5 L748 395.5 L747 395.5 L747 396.5 L746 396.5 L746 396.0 L745 396.0 L745 397.0 L744 397.0 L744 395.0 L743 395.0 L743 396.5 L742 396.5 L742 398.5 L741 398.5 L741 396.5 L740 396.5 L740 396.5 L739 396.5 L739 390.5 L738 390.5 L738 376.0 L737 376.0 L737 371.0 L736 371.0 L736 373.5 L735 373.5 L735 375.5 L734 375.5 L734 386.5 L733 386.5 L733 395.5 L732 395.5 L732 395.5 L731 395.5 L731 397.0 L730 397.0 L730 397.0 L729 397.0 L729 394.5 L728 394.5 L728 395.5 L727 395.5 L727 397.0 L726 397.0 L726 396.0 L725 396.0 L725 397.5 L724 397.5 L724 394.5 L723 394.5 L723 396.5 L722 396.5 L722 398.0 L721 398.0 L721 396.5 L720 396.5 L720 397.0 L719 397.0 L719 394.0 L718 394.0 L718 395.5 L717 395.5 L717 396.0 L716 396.0 L716 395.5 L715 395.5 L715 395.0 L714 395.0 L714 395.0 L713 395.0 L713 394.5 L712 394.5 L712 398.0 L711 398.0 L711 396.5 L710 396.5 L710 397.0 L709 397.0 L709 398.0 L708 398.0 L708 398.0 L707 398.0 L707 395.5 L706 395.5 L706 398.5 L705 398.5 L705 396.5 L704 396.5 L704 397.5 L703 397.5 L703 397.5 L702 397.5 L702 397.5 L701 397.5 L701 399.5 L700 399.5 L700 399.5 L699 399.5 L699 399.0 L698 399.0 L698 398.0 L697 398.0 L697 396.5 L696 396.5 L696 398.5 L695 398.5 L695 397.5 L694 397.5 L694 399.5 L693 399.5 L693 399.5 L692 399.5 L692 399.0 L691 399.0 L691 398.5 L690 398.5 L690 397.5 L689 397.5 L689 399.0 L688 399.0 L688 399.0 L687 399.0 L687 398.0 L686 398.0 L686 401.0 L685 401.0 L685 401.5 L684 401.5 L684 399.5 L683 399.5 L683 400.0 L682 400.0 L682 401.0 L681 401.0 L681 402.0 L680 402.0 L680 399.5 L679 399.5 L679 402.5 L678 402.5 L678 401.5 L677 401.5 L677 400.0 L676 400.0 L676 401.5 L675 401.5 L675 402.5 L674 402.5 L674 400.5 L673 400.5 L673 400.0 L672 400.0 L672 408.5 L671 408.5 L671 417.5 L670 417.5 L670 424.5 L669 424.5 L669 431.0 L668 431.0 L668 437.5 L667 437.5 L667 443.0 L666 443.0 L666 442.0 L665 442.0 L665 441.5 L664 441.5 L664 433.0 L663 433.0 L663 432.5 L662 432.5 L662 427.5 L661 427.5 L661 425.5 L660 425.5 L660 426.0 L659 426.0 L659 426.0 L658 426.0 L658 425.0 L657 425.0 L657 424.0 L656 424.0 L656 423.0 L655 423.0 L655 421.0 L654 421.0 L654 421.5 L653 421.5 L653 420.5 L652 420.5 L652 418.0 L651 418.0 L651 416.5 L650 416.5 L650 420.5 L649 420.5 L649 420.0 L648 420.0 L648 416.5 L647 416.5 L647 413.0 L646 413.0 L646 411.0 L645 411.0 L645 415.0 L644 415.0 L644 411.5 L643 411.5 L643 415.5 L642 415.5 L642 417.0 L641 417.0 L641 416.0 L640 416.0 L640 414.0 L639 414.0 L639 414.0 L638 414.0 L638 409.5 L637 409.5 L637 413.5 L636 413.5 L636 410.0 L635 410.0 L635 409.5 L634 409.5 L634 409.0 L633 409.0 L633 405.0 L632 405.0 L632 405.5 L631 405.5 L631 406.0 L630 406.0 L630 405.5 L629 405.5 L629 403.5 L628 403.5 L628 401.5 L627 401.5 L627 402.5 L626 402.5 L626 403.5 L625 403.5 L625 400.5 L624 400.5 L624 404.5 L623 404.5 L623 403.0 L622 403.0 L622 402.0 L621 402.0 L621 401.5 L620 401.5 L620 403.0 L619 403.0 L619 402.5 L618 402.5 L618 404.5 L617 404.5 L617 402.5 L616 402.5 L616 402.5 L615 402.5 L615 401.5 L614 401.5 L614 400.0 L613 400.0 L613 403.0 L612 403.0 L612 399.5 L611 399.5 L611 402.0 L610 402.0 L610 402.0 L609 402.0 L609 395.0 L608 395.0 L608 392.5 L607 392.5 L607 388.0 L606 388.0 L606 377.5 L605 377.5 L605 369.5 L604 369.5 L604 369.5 L603 369.5 L603 369.5 L602 369.5 L602 370.0 L601 370.0 L601 377.5 L600 377.5 L600 387.0 L599 387.0 L599 386.0 L598 386.0 L598 386.0 L597 386.0 L597 388.5 L596 388.5 L596 387.5 L595 387.5 L595 386.5 L594 386.5 L594 388.0 L593 388.0 L593 386.5 L592 386.5 L592 388.5 L591 388.5 L591 387.0 L590 387.0 L590 389.0 L589 389.0 L589 388.0 L588 388.0 L588 389.0 L587 389.0 L587 390.0 L586 390.0 L586 390.5 L585 390.5 L585 391.5 L584 391.5 L584 391.0 L583 391.0 L583 391.0 L582 391.0 L582 392.0 L581 392.0 L581 391.0 L580 391.0 L580 395.0 L579 395.0 L579 395.0 L578 395.0 L578 397.0 L577 397.0 L577 395.0 L576 395.0 L576 398.5 L575 398.5 L575 400.0 L574 400.0 L574 398.5 L573 398.5 L573 400.5 L572 400.5 L572 403.5 L571 403.5 L571 405.5 L570 405.5 L570 403.5 L569 403.5 L569 404.5 L568 404.5 L568 407.5 L567 407.5 L567 408.5 L566 408.5 L566 412.0 L565 412.0 L565 411.0 L564 411.0 L564 416.0 L563 416.0 L563 417.0 L562 417.0 L562 418.5 L561 418.5 L561 416.0 L560 416.0 L560 418.5 L559 418.5 L559 420.0 L558 420.0 L558 417.5 L557 417.5 L557 423.5 L556 423.5 L556 423.0 L555 423.0 L555 421.0 L554 421.0 L554 425.5 L553 425.5 L553 427.0 L552 427.0 L552 426.5 L551 426.5 L551 429.0 L550 429.0 L550 425.0 L549 425.0 L549 425.0 L548 425.0 L548 421.0 L547 421.0 L547 420.5 L546 420.5 L546 419.0 L545 419.0 L545 412.5 L544 412.5 L544 405.5 L543 405.5 L543 390.5 L542 390.5 L542 374.5 L541 374.5 L541 367.0 L540 367.0 L540 367.0 L539 367.0 L539 367.0 L538 367.0 L538 366.5 L537 366.5 L537 367.0 L536 367.0 L536 366.5 L535 366.5 L535 367.0 L534 367.0 L534 367.0 L533 367.0 L533 367.0 L532 367.0 L532 366.5 L531 366.5 L531 367.0 L530 367.0 L530 367.0 L529 367.0 L529 367.0 L528 367.0 L528 367.0 L527 367.0 L527 367.0 L526 367.0 L526 367.5 L525 367.5 L525 367.0 L524 367.0 L524 367.5 L523 367.5 L523 367.5 L522 367.5 L522 367.5 L521 367.5 L521 367.5 L520 367.5 L520 368.0 L519 368.0 L519 368.0 L518 368.0 L518 368.0 L517 368.0 L517 370.0 L516 370.0 L516 371.5 L515 371.5 L515 373.5 L514 373.5 L514 375.5 L513 375.5 L513 378.0 L512 378.0 L512 380.0 L511 380.0 L511 381.0 L510 381.0 L510 379.5 L509 379.5 L509 380.0 L508 380.0 L508 382.0 L507 382.0 L507 381.5 L506 381.5 L506 382.5 L505 382.5 L505 382.0 L504 382.0 L504 381.5 L503 381.5 L503 382.5 L502 382.5 L502 381.0 L501 381.0 L501 382.5 L500 382.5 L500 382.0 L499 382.0 L499 382.0 L498 382.0 L498 382.5 L497 382.5 L497 382.5 L496 382.5 L496 382.0 L495 382.0 L495 383.5 L494 383.5 L494 382.5 L493 382.5 L493 383.5 L492 383.5 L492 383.0 L491 383.0 L491 382.5 L490 382.5 L490 382.5 L489 382.5 L489 382.5 L488 382.5 L488 382.0 L487 382.0 L487 383.5 L486 383.5 L486 383.0 L485 383.0 L485 383.5 L484 383.5 L484 383.5 L483 383.5 L483 383.5 L482 383.5 L482 383.0 L481 383.0 L481 381.5 L480 381.5 L480 376.5 L479 376.5 L479 370.0 L478 370.0 L478 367.0 L477 367.0 L477 367.0 L476 367.0 L476 367.0 L475 367.0 L475 367.0 L474 367.0 L474 367.0 L473 367.0 L473 366.5 L472 366.5 L472 367.0 L471 367.0 L471 367.0 L470 367.0 L470 367.0 L469 367.0 L469 367.0 L468 367.0 L468 367.0 L467 367.0 L467 373.5 L466 373.5 L466 379.0 L465 379.0 L465 379.5 L464 379.5 L464 380.5 L463 380.5 L463 382.0 L462 382.0 L462 381.0 L461 381.0 L461 383.0 L460 383.0 L460 382.0 L459 382.0 L459 384.0 L458 384.0 L458 382.5 L457 382.5 L457 383.5 L456 383.5 L456 385.0 L455 385.0 L455 385.5 L454 385.5 L454 385.0 L453 385.0 L453 384.5 L452 384.5 L452 385.0 L451 385.0 L451 384.5 L450 384.5 L450 385.5 L449 385.5 L449 385.0 L448 385.0 L448 386.0 L447 386.0 L447 385.0 L446 385.0 L446 385.0 L445 385.0 L445 386.5 L444 386.5 L444 386.5 L443 386.5 L443 386.5 L442 386.5 L442 387.5 L441 387.5 L441 387.5 L440 387.5 L440 387.0 L439 387.0 L439 385.5 L438 385.5 L438 386.0 L437 386.0 L437 387.5 L436 387.5 L436 386.0 L435 386.0 L435 385.5 L434 385.5 L434 385.0 L433 385.0 L433 385.5 L432 385.5 L432 387.5 L431 387.5 L431 387.5 L430 387.5 L430 386.5 L429 386.5 L429 387.0 L428 387.0 L428 386.5 L427 386.5 L427 386.5 L426 386.5 L426 386.0 L425 386.0 L425 386.0 L424 386.0 L424 385.0 L423 385.0 L423 384.5 L422 384.5 L422 385.0 L421 385.0 L421 387.0 L420 387.0 L420 386.0 L419 386.0 L419 387.0 L418 387.0 L418 384.5 L417 384.5 L417 386.0 L416 386.0 L416 387.0 L415 387.0 L415 385.5 L414 385.5 L414 385.5 L413 385.5 L413 386.0 L412 386.0 L412 386.0 L411 386.0 L411 386.0 L410 386.0 L410 384.0 L409 384.0 L409 383.5 L408 383.5 L408 385.0 L407 385.0 L407 383.0 L406 383.0 L406 380.0 L405 380.0 L405 380.0 L404 380.0 L404 384.5 L403 384.5 L403 383.0 L402 383.0 L402 384.0 L401 384.0 L401 386.0 L400 386.0 L400 384.5 L399 384.5 L399 384.5 L398 384.5 L398 384.5 L397 384.5 L397 384.0 L396 384.0 L396 385.0 L395 385.0 L395 385.0 L394 385.0 L394 386.0 L393 386.0 L393 385.0 L392 385.0 L392 386.0 L391 386.0 L391 384.5 L390 384.5 L390 384.5 L389 384.5 L389 386.5 L388 386.5 L388 385.0 L387 385.0 L387 385.0 L386 385.0 L386 386.5 L385 386.5 L385 386.0 L384 386.0 L384 386.5 L383 386.5 L383 386.5 L382 386.5 L382 386.0 L381 386.0 L381 387.0 L380 387.0 L380 385.0 L379 385.0 L379 385.5 L378 385.5 L378 387.0 L377 387.0 L377 386.0 L376 386.0 L376 386.0 L375 386.0 L375 387.5 L374 387.5 L374 387.0 L373 387.0 L373 387.5 L372 387.5 L372 385.5 L371 385.5 L371 387.5 L370 387.5 L370 386.0 L369 386.0 L369 387.0 L368 387.0 L368 387.0 L367 387.0 L367 387.5 L366 387.5 L366 386.5 L365 386.5 L365 387.0 L364 387.0 L364 385.5 L363 385.5 L363 387.0 L362 387.0 L362 386.5 L361 386.5 L361 386.5 L360 386.5 L360 385.5 L359 385.5 L359 386.5 L358 386.5 L358 385.0 L357 385.0 L357 386.5 L356 386.5 L356 385.5 L355 385.5 L355 386.0 L354 386.0 L354 387.0 L353 387.0 L353 387.0 L352 387.0 L352 387.5 L351 387.5 L351 387.5 L350 387.5 L350 387.5 L349 387.5 L349 382.5 L348 382.5 L348 371.5 L347 371.5 L347 366.0 L346 366.0 L346 366.0 L345 366.0 L345 377.0 L344 377.0 L344 397.0 L343 397.0 L343 399.0 L342 399.0 L342 399.5 L341 399.5 L341 398.0 L340 398.0 L340 400.5 L339 400.5 L339 400.5 L338 400.5 L338 401.5 L337 401.5 L337 402.0 L336 402.0 L336 399.5 L335 399.5 L335 399.0 L334 399.0 L334 398.5 L333 398.5 L333 399.5 L332 399.5 L332 399.0 L331 399.0 L331 402.5 L330 402.5 L330 402.5 L329 402.5 L329 400.0 L328 400.0 L328 400.0 L327 400.0 L327 401.5 L326 401.5 L326 399.5 L325 399.5 L325 400.5 L324 400.5 L324 399.5 L323 399.5 L323 400.5 L322 400.5 L322 402.0 L321 402.0 L321 403.0 L320 403.0 L320 402.5 L319 402.5 L319 402.5 L318 402.5 L318 401.0 L317 401.0 L317 403.5 L316 403.5 L316 403.0 L315 403.0 L315 400.5 L314 400.5 L314 402.0 L313 402.0 L313 402.5 L312 402.5 L312 401.5 L311 401.5 L311 403.0 L310 403.0 L310 402.0 L309 402.0 L309 402.0 L308 402.0 L308 400.0 L307 400.0 L307 402.0 L306 402.0 L306 399.0 L305 399.0 L305 401.5 L304 401.5 L304 401.0 L303 401.0 L303 400.0 L302 400.0 L302 400.0 L301 400.0 L301 401.0 L300 401.0 L300 399.5 L299 399.5 L299 398.5 L298 398.5 L298 398.0 L297 398.0 L297 401.5 L296 401.5 L296 400.0 L295 400.0 L295 398.5 L294 398.5 L294 399.5 L293 399.5 L293 400.5 L292 400.5 L292 400.0 L291 400.0 L291 398.0 L290 398.0 L290 401.0 L289 401.0 L289 399.5 L288 399.5 L288 398.0 L287 398.0 L287 396.0 L286 396.0 L286 396.0 L285 396.0 L285 393.5 L284 393.5 L284 390.5 L283 390.5 L283 386.5 L282 386.5 L282 382.0 L281 382.0 L281 377.5 L280 377.5 L280 372.5 L279 372.5 L279 369.5 L278 369.5 L278 370.0 L277 370.0 L277 370.5 L276 370.5 L276 371.0 L275 371.0 L275 372.0 L274 372.0 L274 383.5 L273 383.5 L273 397.0 L272 397.0 L272 398.5 L271 398.5 L271 396.0 L270 396.0 L270 398.5 L269 398.5 L269 397.0 L268 397.0 L268 400.0 L267 400.0 L267 398.5 L266 398.5 L266 399.0 L265 399.0 L265 398.5 L264 398.5 L264 397.0 L263 397.0 L263 400.0 L262 400.0 L262 401.5 L261 401.5 L261 399.0 L260 399.0 L260 398.5 L259 398.5 L259 401.5 L258 401.5 L258 399.0 L257 399.0 L257 398.5 L256 398.5 L256 401.5 L255 401.5 L255 398.5 L254 398.5 L254 401.0 L253 401.0 L253 400.0 L252 400.0 L252 400.5 L251 400.5 L251 402.0 L250 402.0 L250 399.5 L249 399.5 L249 402.5 L248 402.5 L248 402.5 L247 402.5 L247 401.5 L246 401.5 L246 402.5 L245 402.5 L245 402.0 L244 402.0 L244 402.5 L243 402.5 L243 401.5 L242 401.5 L242 401.5 L241 401.5 L241 403.5 L240 403.5 L240 402.5 L239 402.5 L239 401.5 L238 401.5 L238 404.0 L237 404.0 L237 399.5 L236 399.5 L236 399.5 L235 399.5 L235 402.5 L234 402.5 L234 398.5 L233 398.5 L233 399.5 L232 399.5 L232 398.0 L231 398.0 L231 401.0 L230 401.0 L230 400.5 L229 400.5 L229 398.5 L228 398.5 L228 397.0 L227 397.0 L227 396.0 L226 396.0 L226 397.5 L225 397.5 L225 396.0 L224 396.0 L224 394.0 L223 394.0 L223 393.0 L222 393.0 L222 394.0 L221 394.0 L221 393.0 L220 393.0 L220 391.5 L219 391.5 L219 388.5 L218 388.5 L218 387.5 L217 387.5 L217 387.0 L216 387.0 L216 385.5 L215 385.5 L215 387.0 L214 387.0 L214 385.0 L213 385.0 L213 383.5 L212 383.5 L212 383.5 L211 383.5 L211 386.0 L210 386.0 L210 387.0 L209 387.0 L209 388.0 L208 388.0 L208 389.0 L207 389.0 L207 389.0 L206 389.0 L206 391.5 L205 391.5 L205 397.0 L204 397.0 L204 395.0 L203 395.0 L203 396.5 L202 396.5 L202 401.0 L201 401.0 L201 399.0 L200 399.0 L200 400.5 L199 400.5 L199 403.0 L198 403.0 L198 403.0 L197 403.0 L197 405.0 L196 405.0 L196 407.0 L195 407.0 L195 404.0 L194 404.0 L194 405.0 L193 405.0 L193 409.0 L192 409.0 L192 407.5 L191 407.5 L191 410.5 L190 410.5 L190 412.5 L189 412.5 L189 413.0 L188 413.0 L188 413.0 L187 413.0 L187 393.0 L186 393.0 L186 372.0 L185 372.0 L185 370.5 L184 370.5 L184 366.5 L183 366.5 L183 363.5 L182 363.5 L182 363.5 L181 363.5 L181 363.5 L180 363.5 L180 363.5 L179 363.5 L179 363.5 L178 363.5 L178 363.5 L177 363.5 L177 363.5 L176 363.5 L176 363.5 L175 363.5 L175 363.5 L174 363.5 L174 363.5 L173 363.5 L173 363.5 L172 363.5 L172 363.5 L171 363.5 L171 364.0 L170 364.0 L170 364.0 L169 364.0 L169 364.0 L168 364.0 L168 364.0 L167 364.0 L167 364.0 L166 364.0 L166 364.0 L165 364.0 L165 364.0 L164 364.0 L164 364.0 L163 364.0 L163 364.0 L162 364.0 L162 364.0 L161 364.0 L161 364.0 L160 364.0 L160 364.0 L159 364.0 L159 364.0 L158 364.0 L158 364.0 L157 364.0 L157 364.0 L156 364.0 L156 364.0 L155 364.0 L155 364.0 L154 364.0 L154 364.0 L153 364.0 L153 364.0 L152 364.0 L152 364.0 L151 364.0 L151 364.0 L150 364.0 L150 366.0 L149 366.0 L149 368.5 L148 368.5 L148 370.5 L147 370.5 L147 372.5 L146 372.5 L146 374.0 L145 374.0 L145 376.0 L144 376.0 L144 377.0 L143 377.0 L143 378.0 L142 378.0 L142 379.5 L141 379.5 L141 380.5 L140 380.5 L140 381.5 L139 381.5 L139 384.0 L138 384.0 L138 398.5 L137 398.5 L137 397.0 L136 397.0 L136 399.0 L135 399.0 L135 399.0 L134 399.0 L134 401.0 L133 401.0 L133 400.5 L132 400.5 L132 400.5 L131 400.5 L131 397.5 L130 397.5 L130 399.0 L129 399.0 L129 397.5 L128 397.5 L128 398.0 L127 398.0 L127 397.5 L126 397.5 L126 398.0 L125 398.0 L125 397.5 L124 397.5 L124 399.5 L123 399.5 L123 400.5 L122 400.5 L122 398.0 L121 398.0 L121 399.0 L120 399.0 L120 400.5 L119 400.5 L119 398.0 L118 398.0 L118 400.0 L117 400.0 L117 398.5 L116 398.5 L116 398.5 L115 398.5 L115 402.0 L114 402.0 L114 399.5 L113 399.5 L113 398.0 L112 398.0 L112 400.5 L111 400.5 L111 402.0 L110 402.0 L110 402.5 L109 402.5 L109 399.5 L108 399.5 L108 399.0 L107 399.0 L107 400.0 L106 400.0 L106 401.0 L105 401.0 L105 403.5 L104 403.5 L104 401.5 L103 401.5 L103 400.5 L102 400.5 L102 401.5 L101 401.5 L101 403.0 L100 403.0 L100 403.0 L99 403.0 L99 402.5 L98 402.5 L98 401.0 L97 401.0 L97 401.0 L96 401.0 L96 401.5 L95 401.5 L95 400.0 L94 400.0 L94 404.5 L93 404.5 L93 402.0 L92 402.0 L92 404.0 L91 404.0 L91 400.5 L90 400.5 L90 403.0 L89 403.0 L89 384.5 L88 384.5 L88 375.5 L87 375.5 L87 375.5 L86 375.5 L86 374.0 L85 374.0 L85 382.5 L84 382.5 L84 395.0 L83 395.0 L83 397.0 L82 397.0 L82 398.5 L81 398.5 L81 395.5 L80 395.5 L80 395.5 L79 395.5 L79 396.5 L78 396.5 L78 398.5 L77 398.5 L77 395.5 L76 395.5 L76 397.5 L75 397.5 L75 395.5 L74 395.5 L74 399.0 L73 399.0 L73 396.0 L72 396.0 L72 396.0 L71 396.0 L71 397.0 L70 397.0 L70 397.5 L69 397.5 L69 396.0 L68 396.0 L68 399.5 L67 399.5 L67 399.0 L66 399.0 L66 397.0 L65 397.0 L65 396.5 L64 396.5 L64 399.0 L63 399.0 L63 397.5 L62 397.5 L62 399.5 L61 399.5 L61 399.5 L60 399.5 L60 400.5 L59 400.5 L59 397.5 L58 397.5 L58 397.5 L57 397.5 L57 399.0 L56 399.0 L56 399.0 L55 399.0 L55 400.0 L54 400.0 L54 398.0 L53 398.0 L53 400.0 L52 400.0 L52 402.0 L51 402.0 L51 400.0 L50 400.0Z" fill="#74a0d5"/></svg>
<div style="left:50px;top:183px;width:848px;height:1px;background:rgba(112,120,132,0.72)"></div>
<div style="left:50px;top:203px;width:848px;height:1px;background:rgba(112,120,132,0.72)"></div>
<div style="left:50px;top:223px;width:848px;height:1px;background:rgba(112,120,132,0.72)"></div>
<div style="left:50px;top:243px;width:848px;height:1px;background:rgba(112,120,132,0.72)"></div>
<div style="left:50px;top:263px;width:848px;height:1px;background:rgba(112,120,132,0.72)"></div>
<div style="left:50px;top:283px;width:848px;height:1px;background:rgba(112,120,132,0.72)"></div>
<div style="left:50px;top:303px;width:848px;height:1px;background:rgba(112,120,132,0.72)"></div>
<div style="left:50px;top:323px;width:848px;height:1px;background:rgba(112,120,132,0.72)"></div>
<div style="left:50px;top:343px;width:848px;height:1px;background:rgba(112,120,132,0.72)"></div>
<div style="left:50px;top:363px;width:848px;height:1px;background:rgba(112,120,132,0.72)"></div>
<div style="left:50px;top:383px;width:848px;height:1px;background:rgba(112,120,132,0.72)"></div>
<div style="left:50px;top:403px;width:848px;height:1px;background:rgba(112,120,132,0.72)"></div>
<div style="left:50px;top:423px;width:848px;height:1px;background:rgba(112,120,132,0.72)"></div>
<div style="left:50px;top:443px;width:848px;height:1px;background:rgba(112,120,132,0.72)"></div>
<div style="left:50px;top:463px;width:848px;height:1px;background:rgba(112,120,132,0.72)"></div>
<div style="left:50px;top:483px;width:848px;height:1px;background:rgba(112,120,132,0.72)"></div>
<div style="left:50px;top:503px;width:848px;height:1px;background:rgba(112,120,132,0.72)"></div>
<div style="left:50px;top:523px;width:848px;height:1px;background:rgba(112,120,132,0.72)"></div>
<div style="left:50px;top:543px;width:848px;height:1px;background:rgba(112,120,132,0.72)"></div>
<div style="left:78px;top:181px;width:1px;height:363px;background:rgba(112,120,132,0.78)"></div>
<div style="left:143px;top:181px;width:1px;height:363px;background:rgba(112,120,132,0.78)"></div>
<div style="left:209px;top:181px;width:1px;height:363px;background:rgba(112,120,132,0.78)"></div>
<div style="left:274px;top:181px;width:1px;height:363px;background:rgba(112,120,132,0.78)"></div>
<div style="left:340px;top:181px;width:1px;height:363px;background:rgba(112,120,132,0.78)"></div>
<div style="left:405px;top:181px;width:1px;height:363px;background:rgba(112,120,132,0.78)"></div>
<div style="left:471px;top:181px;width:1px;height:363px;background:rgba(112,120,132,0.78)"></div>
<div style="left:536px;top:181px;width:1px;height:363px;background:rgba(112,120,132,0.78)"></div>
<div style="left:601px;top:181px;width:1px;height:363px;background:rgba(112,120,132,0.78)"></div>
<div style="left:667px;top:181px;width:1px;height:363px;background:rgba(112,120,132,0.78)"></div>
<div style="left:732px;top:181px;width:1px;height:363px;background:rgba(112,120,132,0.78)"></div>
<div style="left:798px;top:181px;width:1px;height:363px;background:rgba(112,120,132,0.78)"></div>
<div style="left:863px;top:181px;width:1px;height:363px;background:rgba(112,120,132,0.78)"></div>
<div style="left:52px;top:364px;width:32px;height:19px;background:linear-gradient(to bottom,#ffae5a 0%,#ff8c14 40%,#ff8810 60%,#ffa44a 100%);border:1px solid #d9c7b2;"></div>
<div style="left:52px;top:425px;width:32px;height:18px;background:linear-gradient(to bottom,#a898ea 0%,#7c5ce2 40%,#7a5ae0 60%,#9c8ce8 100%);border:1px solid #c0bcd6;"></div>
<div style="left:54px;top:505px;width:30px;height:18px;background:linear-gradient(to bottom,#4cb4b4 0%,#049292 40%,#009090 60%,#3cacac 100%);border:1px solid #a8c8c8;"></div>
<div style="left:87px;top:308px;width:19px;height:18px;background:linear-gradient(to bottom,#ffae5a 0%,#ff8c14 40%,#ff8810 60%,#ffa44a 100%);border:1px solid #d9c7b2;"></div>
<div style="left:90px;top:389px;width:16px;height:18px;background:linear-gradient(to bottom,#a898ea 0%,#7c5ce2 40%,#7a5ae0 60%,#9c8ce8 100%);border:1px solid #c0bcd6;"></div>
<div style="left:90px;top:428px;width:16px;height:18px;background:linear-gradient(to bottom,#4cb4b4 0%,#049292 40%,#009090 60%,#3cacac 100%);border:1px solid #a8c8c8;"></div>
<div style="left:106px;top:267px;width:42px;height:18px;background:linear-gradient(to bottom,#ffae5a 0%,#ff8c14 40%,#ff8810 60%,#ffa44a 100%);border:1px solid #d9c7b2;"></div>
<div style="left:106px;top:326px;width:32px;height:19px;background:linear-gradient(to bottom,#a898ea 0%,#7c5ce2 40%,#7a5ae0 60%,#9c8ce8 100%);border:1px solid #c0bcd6;"></div>
<div style="left:107px;top:387px;width:32px;height:18px;background:linear-gradient(to bottom,#4cb4b4 0%,#049292 40%,#009090 60%,#3cacac 100%);border:1px solid #a8c8c8;"></div>
<div style="left:188px;top:370px;width:31px;height:19px;background:linear-gradient(to bottom,#ffae5a 0%,#ff8c14 40%,#ff8810 60%,#ffa44a 100%);border:1px solid #d9c7b2;"></div>
<div style="left:189px;top:428px;width:16px;height:18px;background:linear-gradient(to bottom,#a898ea 0%,#7c5ce2 40%,#7a5ae0 60%,#9c8ce8 100%);border:1px solid #c0bcd6;"></div>
<div style="left:189px;top:468px;width:17px;height:18px;background:linear-gradient(to bottom,#4cb4b4 0%,#049292 40%,#009090 60%,#3cacac 100%);border:1px solid #a8c8c8;"></div>
<div style="left:219px;top:360px;width:54px;height:18px;background:linear-gradient(to bottom,#ffae5a 0%,#ff8c14 40%,#ff8810 60%,#ffa44a 100%);border:1px solid #d9c7b2;"></div>
<div style="left:220px;top:420px;width:36px;height:18px;background:linear-gradient(to bottom,#a898ea 0%,#7c5ce2 40%,#7a5ae0 60%,#9c8ce8 100%);border:1px solid #c0bcd6;"></div>
<div style="left:257px;top:417px;width:16px;height:18px;background:linear-gradient(to bottom,#a898ea 0%,#7c5ce2 40%,#7a5ae0 60%,#9c8ce8 100%);border:1px solid #c0bcd6;"></div>
<div style="left:221px;top:500px;width:53px;height:18px;background:linear-gradient(to bottom,#4cb4b4 0%,#049292 40%,#009090 60%,#3cacac 100%);border:1px solid #a8c8c8;"></div>
<div style="left:281px;top:363px;width:60px;height:19px;background:linear-gradient(to bottom,#ffae5a 0%,#ff8c14 40%,#ff8810 60%,#ffa44a 100%);border:1px solid #d9c7b2;"></div>
<div style="left:281px;top:422px;width:60px;height:18px;background:linear-gradient(to bottom,#a898ea 0%,#7c5ce2 40%,#7a5ae0 60%,#9c8ce8 100%);border:1px solid #c0bcd6;"></div>
<div style="left:283px;top:462px;width:58px;height:18px;background:linear-gradient(to bottom,#4cb4b4 0%,#049292 40%,#009090 60%,#3cacac 100%);border:1px solid #a8c8c8;"></div>
<div style="left:348px;top:471px;width:52px;height:19px;background:linear-gradient(to bottom,#ffae5a 0%,#ff8c14 40%,#ff8810 60%,#ffa44a 100%);border:1px solid #d9c7b2;"></div>
<div style="left:350px;top:532px;width:50px;height:11px;background:linear-gradient(to bottom,#a898ea 0%,#7c5ce2 40%,#7a5ae0 60%,#9c8ce8 100%);border:1px solid #c0bcd6;border-bottom:none;"></div>
<div style="left:404px;top:539px;width:15px;height:4px;background:linear-gradient(to bottom,#ffae5a 0%,#ff8c14 40%,#ff8810 60%,#ffa44a 100%);border:1px solid #d9c7b2;border-bottom:none;"></div>
<div style="left:419px;top:519px;width:48px;height:19px;background:linear-gradient(to bottom,#ffae5a 0%,#ff8c14 40%,#ff8810 60%,#ffa44a 100%);border:1px solid #d9c7b2;"></div>
<div style="left:480px;top:507px;width:36px;height:20px;background:linear-gradient(to bottom,#ffae5a 0%,#ff8c14 40%,#ff8810 60%,#ffa44a 100%);border:1px solid #d9c7b2;"></div>
<div style="left:482px;top:528px;width:34px;height:15px;background:linear-gradient(to bottom,#a898ea 0%,#7c5ce2 40%,#7a5ae0 60%,#9c8ce8 100%);border:1px solid #c0bcd6;border-bottom:none;"></div>
<div style="left:544px;top:368px;width:56px;height:19px;background:linear-gradient(to bottom,#ffae5a 0%,#ff8c14 40%,#ff8810 60%,#ffa44a 100%);border:1px solid #d9c7b2;"></div>
<div style="left:544px;top:384px;width:28px;height:18px;background:linear-gradient(to bottom,#a898ea 0%,#7c5ce2 40%,#7a5ae0 60%,#9c8ce8 100%);border:1px solid #c0bcd6;"></div>
<div style="left:546px;top:464px;width:26px;height:18px;background:linear-gradient(to bottom,#4cb4b4 0%,#049292 40%,#009090 60%,#3cacac 100%);border:1px solid #a8c8c8;"></div>
<div style="left:573px;top:432px;width:27px;height:19px;background:linear-gradient(to bottom,#a898ea 0%,#7c5ce2 40%,#7a5ae0 60%,#9c8ce8 100%);border:1px solid #c0bcd6;"></div>
<div style="left:573px;top:514px;width:28px;height:18px;background:linear-gradient(to bottom,#4cb4b4 0%,#049292 40%,#009090 60%,#3cacac 100%);border:1px solid #a8c8c8;"></div>
<div style="left:610px;top:382px;width:28px;height:18px;background:linear-gradient(to bottom,#ffae5a 0%,#ff8c14 40%,#ff8810 60%,#ffa44a 100%);border:1px solid #d9c7b2;"></div>
<div style="left:611px;top:463px;width:27px;height:18px;background:linear-gradient(to bottom,#a898ea 0%,#7c5ce2 40%,#7a5ae0 60%,#9c8ce8 100%);border:1px solid #c0bcd6;"></div>
<div style="left:612px;top:502px;width:26px;height:18px;background:linear-gradient(to bottom,#4cb4b4 0%,#049292 40%,#009090 60%,#3cacac 100%);border:1px solid #a8c8c8;"></div>
<div style="left:638px;top:374px;width:17px;height:18px;background:linear-gradient(to bottom,#ffae5a 0%,#ff8c14 40%,#ff8810 60%,#ffa44a 100%);border:1px solid #d9c7b2;"></div>
<div style="left:638px;top:453px;width:17px;height:18px;background:linear-gradient(to bottom,#a898ea 0%,#7c5ce2 40%,#7a5ae0 60%,#9c8ce8 100%);border:1px solid #c0bcd6;"></div>
<div style="left:638px;top:494px;width:17px;height:18px;background:linear-gradient(to bottom,#4cb4b4 0%,#049292 40%,#009090 60%,#3cacac 100%);border:1px solid #a8c8c8;"></div>
<div style="left:655px;top:375px;width:17px;height:18px;background:linear-gradient(to bottom,#ffae5a 0%,#ff8c14 40%,#ff8810 60%,#ffa44a 100%);border:1px solid #d9c7b2;"></div>
<div style="left:655px;top:454px;width:17px;height:19px;background:linear-gradient(to bottom,#a898ea 0%,#7c5ce2 40%,#7a5ae0 60%,#9c8ce8 100%);border:1px solid #c0bcd6;"></div>
<div style="left:655px;top:495px;width:16px;height:18px;background:linear-gradient(to bottom,#4cb4b4 0%,#049292 40%,#009090 60%,#3cacac 100%);border:1px solid #a8c8c8;"></div>
<div style="left:672px;top:315px;width:17px;height:18px;background:linear-gradient(to bottom,#ffae5a 0%,#ff8c14 40%,#ff8810 60%,#ffa44a 100%);border:1px solid #d9c7b2;"></div>
<div style="left:672px;top:455px;width:16px;height:19px;background:linear-gradient(to bottom,#4cb4b4 0%,#049292 40%,#009090 60%,#3cacac 100%);border:1px solid #a8c8c8;"></div>
<div style="left:689px;top:297px;width:46px;height:19px;background:linear-gradient(to bottom,#ffae5a 0%,#ff8c14 40%,#ff8810 60%,#ffa44a 100%);border:1px solid #d9c7b2;"></div>
<div style="left:672px;top:375px;width:64px;height:19px;background:linear-gradient(to bottom,#a898ea 0%,#7c5ce2 40%,#7a5ae0 60%,#9c8ce8 100%);border:1px solid #c0bcd6;"></div>
<div style="left:689px;top:418px;width:47px;height:18px;background:linear-gradient(to bottom,#4cb4b4 0%,#049292 40%,#009090 60%,#3cacac 100%);border:1px solid #a8c8c8;"></div>
<div style="left:740px;top:361px;width:158px;height:19px;background:linear-gradient(to bottom,#ffae5a 0%,#ff8c14 40%,#ff8810 60%,#ffa44a 100%);border:1px solid #d9c7b2;border-right:none;"></div>
<div style="left:740px;top:382px;width:158px;height:18px;background:linear-gradient(to bottom,#a898ea 0%,#7c5ce2 40%,#7a5ae0 60%,#9c8ce8 100%);border:1px solid #c0bcd6;border-right:none;"></div>
<div style="left:741px;top:462px;width:157px;height:18px;background:linear-gradient(to bottom,#4cb4b4 0%,#049292 40%,#009090 60%,#3cacac 100%);border:1px solid #a8c8c8;border-right:none;"></div>
<div style="left:51px;top:285px;width:33px;height:19px;background:linear-gradient(to bottom,#f06a35 0%,#ea2a20 42%,#e8221e 55%,#f06032 100%);border:1px solid #55504e;"></div>
<div style="left:86px;top:247px;width:20px;height:19px;background:linear-gradient(to bottom,#f06a35 0%,#ea2a20 42%,#e8221e 55%,#f06032 100%);border:1px solid #55504e;"></div>
<div style="left:105px;top:226px;width:43px;height:19px;background:linear-gradient(to bottom,#f06a35 0%,#ea2a20 42%,#e8221e 55%,#f06032 100%);border:1px solid #55504e;"></div>
<div style="left:186px;top:291px;width:32px;height:20px;background:linear-gradient(to bottom,#a8dcf2 0%,#62e2f8 45%,#60e0f6 55%,#9cd8f0 100%);border:1px solid #4c5560;"></div>
<div style="left:218px;top:319px;width:39px;height:19px;background:linear-gradient(to bottom,#a8dcf2 0%,#62e2f8 45%,#60e0f6 55%,#9cd8f0 100%);border:1px solid #4c5560;"></div>
<div style="left:256px;top:318px;width:17px;height:19px;background:linear-gradient(to bottom,#a8dcf2 0%,#62e2f8 45%,#60e0f6 55%,#9cd8f0 100%);border:1px solid #4c5560;"></div>
<div style="left:280px;top:281px;width:61px;height:20px;background:linear-gradient(to bottom,#a8dcf2 0%,#62e2f8 45%,#60e0f6 55%,#9cd8f0 100%);border:1px solid #4c5560;"></div>
<div style="left:347px;top:391px;width:53px;height:20px;background:linear-gradient(to bottom,#a8dcf2 0%,#62e2f8 45%,#60e0f6 55%,#9cd8f0 100%);border:1px solid #4c5560;"></div>
<div style="left:399px;top:468px;width:43px;height:19px;background:linear-gradient(to bottom,#f06a35 0%,#ea2a20 42%,#e8221e 55%,#f06032 100%);border:1px solid #55504e;"></div>
<div style="left:441px;top:458px;width:26px;height:20px;background:linear-gradient(to bottom,#f06a35 0%,#ea2a20 42%,#e8221e 55%,#f06032 100%);border:1px solid #55504e;"></div>
<div style="left:480px;top:427px;width:36px;height:20px;background:linear-gradient(to bottom,#f06a35 0%,#ea2a20 42%,#e8221e 55%,#f06032 100%);border:1px solid #55504e;"></div>
<div style="left:542px;top:304px;width:30px;height:19px;background:linear-gradient(to bottom,#f06a35 0%,#ea2a20 42%,#e8221e 55%,#f06032 100%);border:1px solid #55504e;"></div>
<div style="left:571px;top:292px;width:29px;height:19px;background:linear-gradient(to bottom,#f06a35 0%,#ea2a20 42%,#e8221e 55%,#f06032 100%);border:1px solid #55504e;"></div>
<div style="left:608px;top:322px;width:30px;height:20px;background:linear-gradient(to bottom,#f06a35 0%,#ea2a20 42%,#e8221e 55%,#f06032 100%);border:1px solid #55504e;"></div>
<div style="left:637px;top:313px;width:18px;height:19px;background:linear-gradient(to bottom,#f06a35 0%,#ea2a20 42%,#e8221e 55%,#f06032 100%);border:1px solid #55504e;"></div>
<div style="left:654px;top:314px;width:18px;height:19px;background:linear-gradient(to bottom,#f06a35 0%,#ea2a20 42%,#e8221e 55%,#f06032 100%);border:1px solid #55504e;"></div>
<div style="left:671px;top:254px;width:17px;height:20px;background:linear-gradient(to bottom,#f06a35 0%,#ea2a20 42%,#e8221e 55%,#f06032 100%);border:1px solid #55504e;"></div>
<div style="left:687px;top:237px;width:48px;height:20px;background:linear-gradient(to bottom,#f06a35 0%,#ea2a20 42%,#e8221e 55%,#f06032 100%);border:1px solid #55504e;"></div>
<div style="left:739px;top:281px;width:159px;height:20px;background:linear-gradient(to bottom,#f06a35 0%,#ea2a20 42%,#e8221e 55%,#f06032 100%);border:1px solid #55504e;border-right:none;"></div>
<svg style="left:50px;top:181px;width:848px;height:363px" viewBox="50 181 848 363"><path d="M52.0 386.0 L52.6 379.0 L54.5 375.0 L55.6 375.7 L56.8 376.6 L57.9 377.8 L59.0 378.0 L60.1 376.6 L61.2 375.4 L62.3 374.1 L63.4 372.7 L64.5 371.5 L65.6 371.2 L66.7 370.4 L67.8 370.9 L69.0 371.4 L70.1 370.7 L71.2 371.5 L72.3 371.9 L73.4 372.3 L74.6 374.0 L75.7 374.6 L76.8 375.0 L77.9 372.8 L78.9 372.6 L80.0 370.4 L81.2 372.2 L82.4 372.7 L83.2 379.0 L83.8 386.0 M52.0 446.5 L52.6 439.5 L54.5 435.5 L55.6 436.2 L56.8 437.1 L57.9 438.3 L59.0 438.5 L60.1 437.1 L61.2 435.9 L62.3 434.6 L63.4 433.2 L64.5 432.0 L65.6 431.7 L66.7 430.9 L67.8 431.4 L69.0 431.9 L70.1 431.2 L71.2 432.0 L72.3 432.4 L73.4 432.8 L74.6 434.5 L75.7 435.1 L76.8 435.5 L77.9 433.3 L78.9 433.1 L80.0 430.9 L81.2 432.7 L82.4 433.2 L83.2 439.5 L83.8 446.5 M52.0 526.5 L52.6 519.5 L54.5 515.5 L55.6 516.2 L56.8 517.1 L57.9 518.3 L59.0 518.5 L60.1 517.1 L61.2 515.9 L62.3 514.6 L63.4 513.2 L64.5 512.0 L65.6 511.7 L66.7 510.9 L67.8 511.4 L69.0 511.9 L70.1 511.2 L71.2 512.0 L72.3 512.4 L73.4 512.8 L74.6 514.5 L75.7 515.1 L76.8 515.5 L77.9 513.3 L78.9 513.1 L80.0 510.9 L81.2 512.7 L82.4 513.2 L83.2 519.5 L83.8 526.5 M86.8 412.5 L87.5 360.5 L88.4 334.1 L90.2 325.1 L91.3 323.4 L92.4 321.8 L93.5 321.6 L94.7 321.2 L95.8 320.5 L96.9 318.4 L98.0 317.3 L99.1 314.8 L100.2 313.5 L101.3 311.8 L102.4 309.6 L103.6 308.5 L104.7 306.2 L105.8 304.2 L107.0 301.7 M86.8 493.5 L87.5 441.5 L88.4 415.1 L90.2 406.1 L91.3 404.4 L92.4 402.8 L93.5 402.6 L94.7 402.2 L95.8 401.5 L96.9 399.4 L98.0 398.3 L99.1 395.8 L100.2 394.5 L101.3 392.8 L102.4 390.6 L103.6 389.5 L104.7 387.2 L105.8 385.2 L107.0 382.7 M86.8 532.5 L87.5 480.5 L88.4 454.1 L90.2 445.1 L91.3 443.4 L92.4 441.8 L93.5 441.6 L94.7 441.2 L95.8 440.5 L96.9 438.4 L98.0 437.3 L99.1 434.8 L100.2 433.5 L101.3 431.8 L102.4 429.6 L103.6 428.5 L104.7 426.2 L105.8 424.2 L107.0 421.7 M107.0 281.7 L108.1 280.5 L109.2 280.6 L110.3 279.5 L111.4 280.1 L112.5 280.6 L113.6 279.7 L114.7 280.5 L115.8 279.2 L117.0 278.2 L118.1 277.5 L119.2 277.2 L120.3 277.1 L121.5 275.4 L122.6 275.6 L123.7 275.0 L124.8 273.8 L125.9 273.2 L127.0 272.8 L128.1 273.4 L129.3 274.9 L130.4 275.0 L131.4 273.9 L132.4 271.6 L133.4 270.8 L134.4 269.9 L135.7 271.3 L136.9 274.7 L138.2 276.1 L139.3 276.8 L140.4 276.9 L141.5 277.0 L142.6 276.5 L143.8 276.4 L145.1 276.2 L146.3 275.4 L147.5 274.3 M187.0 408.5 L187.7 379.5 L188.8 377.4 L190.0 376.0 L191.0 376.8 L192.0 377.4 L193.0 378.3 L194.0 378.5 L195.0 378.8 L196.0 379.4 L197.0 380.2 L198.0 378.1 L199.0 375.7 L200.0 373.2 L201.0 371.2 L202.0 369.8 L203.0 367.8 L204.4 370.2 L205.0 383.5 M187.0 466.0 L187.7 437.0 L188.8 434.9 L190.0 433.5 L191.0 434.3 L192.0 434.9 L193.0 435.8 L194.0 436.0 L195.0 436.3 L196.0 436.9 L197.0 437.7 L198.0 435.6 L199.0 433.2 L200.0 430.7 L201.0 428.7 L202.0 427.3 L203.0 425.3 L204.4 427.7 L205.0 441.0 M187.0 506.0 L187.7 477.0 L188.8 474.9 L190.0 473.5 L191.0 474.3 L192.0 474.9 L193.0 475.8 L194.0 476.0 L195.0 476.3 L196.0 476.9 L197.0 477.7 L198.0 475.6 L199.0 473.2 L200.0 470.7 L201.0 468.7 L202.0 467.3 L203.0 465.3 L204.4 467.7 L205.0 481.0 M207.0 383.5 L207.6 440.5 M220.0 386.8 L221.0 375.8 L222.0 372.1 L223.0 368.7 L224.0 365.2 L225.2 366.9 L226.4 368.8 L227.4 370.0 L228.5 371.3 L229.5 372.7 L230.5 371.8 L231.6 370.4 L232.6 369.6 L233.8 368.8 L234.9 367.8 L236.2 367.9 L237.5 368.8 L238.8 369.6 L239.8 369.7 L240.9 369.7 L241.9 370.3 L243.1 372.9 L244.2 375.0 L245.2 373.0 L246.3 371.7 L247.3 369.6 L248.3 368.6 L249.4 366.4 L250.4 365.2 L251.6 366.6 L252.7 367.3 L253.8 373.4 L255.0 378.8 L256.0 387.4 L257.3 385.0 L258.5 379.0 L259.7 372.7 L260.9 366.0 L262.0 360.3 L263.1 357.8 L264.3 355.3 L265.8 358.8 L267.0 364.3 L268.2 369.6 L269.4 371.3 L270.5 373.4 L272.3 369.6 M220.0 446.0 L221.0 435.0 L222.0 431.3 L223.0 427.9 L224.0 424.4 L225.2 426.1 L226.4 428.0 L227.4 429.2 L228.5 430.5 L229.5 431.9 L230.5 431.0 L231.6 429.6 L232.6 428.8 L233.8 428.0 L234.9 427.0 L236.2 427.1 L237.5 428.0 L238.8 428.8 L239.8 428.9 L240.9 428.9 L241.9 429.5 L243.1 432.1 L244.2 434.2 L245.2 432.2 L246.3 430.9 L247.3 428.8 L248.3 427.8 L249.4 425.6 L250.4 424.4 L251.6 425.8 L252.7 426.5 L253.8 432.6 L255.0 438.0 L256.0 446.6 L257.3 444.2 L258.5 438.2 L259.7 431.9 L260.9 425.2 L262.0 419.5 L263.1 417.0 L264.3 414.5 L265.8 418.0 L267.0 423.5 L268.2 428.8 L269.4 430.5 L270.5 432.6 L272.3 428.8 M220.0 527.0 L221.0 516.0 L222.0 512.3 L223.0 508.9 L224.0 505.4 L225.2 507.1 L226.4 509.0 L227.4 510.2 L228.5 511.5 L229.5 512.9 L230.5 512.0 L231.6 510.6 L232.6 509.8 L233.8 509.0 L234.9 508.0 L236.2 508.1 L237.5 509.0 L238.8 509.8 L239.8 509.9 L240.9 509.9 L241.9 510.5 L243.1 513.1 L244.2 515.2 L245.2 513.2 L246.3 511.9 L247.3 509.8 L248.3 508.8 L249.4 506.6 L250.4 505.4 L251.6 506.8 L252.7 507.5 L253.8 513.6 L255.0 519.0 L256.0 527.6 L257.3 525.2 L258.5 519.2 L259.7 512.9 L260.9 506.2 L262.0 500.5 L263.1 498.0 L264.3 495.5 L265.8 499.0 L267.0 504.5 L268.2 509.8 L269.4 511.5 L270.5 513.6 L272.3 509.8 M288.3 380.1 L289.5 367.0 L291.4 369.3 L292.5 369.1 L293.7 369.2 L294.9 369.2 L296.0 368.5 L297.1 367.7 L298.3 367.6 L299.5 367.0 L300.6 366.2 L301.6 366.9 L302.7 366.8 L303.7 367.7 L304.7 368.3 L305.8 369.7 L306.8 370.8 L308.0 370.3 L309.1 369.0 L310.3 368.5 L311.5 367.7 L312.6 370.3 L313.8 373.2 L315.0 377.4 L316.1 380.9 L317.2 381.3 L318.4 380.9 L319.4 377.7 L320.5 375.2 L321.5 371.6 L322.5 368.0 L323.6 365.5 L324.6 362.0 L325.8 364.9 L326.9 367.0 L328.8 380.9 L329.8 386.8 L330.8 393.3 L332.4 392.5 L333.9 378.5 L335.0 373.0 L336.2 367.0 L337.8 363.1 L339.0 371.5 L339.8 397.5 M288.3 438.6 L289.5 425.5 L291.4 427.8 L292.5 427.6 L293.7 427.7 L294.9 427.7 L296.0 427.0 L297.1 426.2 L298.3 426.1 L299.5 425.5 L300.6 424.7 L301.6 425.4 L302.7 425.3 L303.7 426.2 L304.7 426.8 L305.8 428.2 L306.8 429.3 L308.0 428.8 L309.1 427.5 L310.3 427.0 L311.5 426.2 L312.6 428.8 L313.8 431.7 L315.0 435.9 L316.1 439.4 L317.2 439.8 L318.4 439.4 L319.4 436.2 L320.5 433.7 L321.5 430.1 L322.5 426.5 L323.6 424.0 L324.6 420.5 L325.8 423.4 L326.9 425.5 L328.8 439.4 L329.8 445.3 L330.8 451.8 L332.4 451.0 L333.9 437.0 L335.0 431.5 L336.2 425.5 L337.8 421.6 L339.0 430.0 L339.8 456.0 M288.3 478.6 L289.5 465.5 L291.4 467.8 L292.5 467.6 L293.7 467.7 L294.9 467.7 L296.0 467.0 L297.1 466.2 L298.3 466.1 L299.5 465.5 L300.6 464.7 L301.6 465.4 L302.7 465.3 L303.7 466.2 L304.7 466.8 L305.8 468.2 L306.8 469.3 L308.0 468.8 L309.1 467.5 L310.3 467.0 L311.5 466.2 L312.6 468.8 L313.8 471.7 L315.0 475.9 L316.1 479.4 L317.2 479.8 L318.4 479.4 L319.4 476.2 L320.5 473.7 L321.5 470.1 L322.5 466.5 L323.6 464.0 L324.6 460.5 L325.8 463.4 L326.9 465.5 L328.8 479.4 L329.8 485.3 L330.8 491.8 L332.4 491.0 L333.9 477.0 L335.0 471.5 L336.2 465.5 L337.8 461.6 L339.0 470.0 L339.8 496.0 M347.6 529.5 L348.7 511.1 L350.0 505.6 L351.3 500.8 L352.4 497.9 L353.4 494.4 L354.4 491.1 L355.5 488.4 L356.5 486.3 L357.6 484.2 L358.6 482.2 L359.6 480.1 L360.6 479.2 L361.7 478.2 L362.7 477.3 L363.8 477.1 L364.8 476.0 L365.8 475.5 L366.9 475.7 L367.9 475.5 L368.9 475.4 L370.0 475.2 L371.0 474.4 L372.0 473.8 L373.0 473.6 L374.0 473.9 L375.0 473.5 L376.0 472.8 L377.0 472.9 L378.1 473.5 L379.1 474.0 L380.1 474.4 L381.2 474.0 L382.2 474.4 L383.3 475.0 L384.3 474.7 L385.4 476.2 L386.4 475.7 L387.4 476.6 L388.5 476.7 L389.5 477.0 L390.6 477.9 L391.8 478.6 L392.9 479.7 L394.0 480.1 L395.4 484.4 L396.7 488.4 L397.7 492.3 L398.8 496.2 L399.8 500.8 L400.9 509.0 L401.9 517.3 L402.9 530.2 L404.0 542.0 L405.6 562.5 L406.4 579.5 M347.6 590.5 L348.7 572.1 L350.0 566.6 L351.3 561.8 L352.4 558.9 L353.4 555.4 L354.4 552.1 L355.5 549.4 L356.5 547.3 L357.6 545.2 L358.6 543.2 L359.6 541.1 L360.6 540.2 L361.7 539.2 L362.7 538.3 L363.8 538.1 L364.8 537.0 L365.8 536.5 L366.9 536.7 L367.9 536.5 L368.9 536.4 L370.0 536.2 L371.0 535.4 L372.0 534.8 L373.0 534.6 L374.0 534.9 L375.0 534.5 L376.0 533.8 L377.0 533.9 L378.1 534.5 L379.1 535.0 L380.1 535.4 L381.2 535.0 L382.2 535.4 L383.3 536.0 L384.3 535.7 L385.4 537.2 L386.4 536.7 L387.4 537.6 L388.5 537.7 L389.5 538.0 L390.6 538.9 L391.8 539.6 L392.9 540.7 L394.0 541.1 L395.4 545.4 L396.7 549.4 L397.7 553.3 L398.8 557.2 L399.8 561.8 L400.9 570.0 L401.9 578.3 L402.9 591.2 L404.0 603.0 L405.6 623.5 L406.4 640.5 M413.0 565.5 L414.3 539.5 L415.3 537.2 L416.4 534.9 L417.4 532.3 L418.4 531.3 L419.4 530.3 L420.5 529.2 L421.5 528.6 L422.5 527.2 L423.6 527.8 L424.6 528.4 L425.6 529.3 L426.7 530.2 L427.7 530.3 L428.8 530.6 L429.8 530.8 L430.8 531.3 L431.8 532.7 L432.9 534.6 L433.9 536.5 L434.9 534.9 L436.0 533.8 L437.0 532.3 L438.0 529.7 L439.0 527.2 L440.0 525.1 L441.0 520.7 L442.0 516.8 L443.1 519.9 L444.2 523.0 L445.2 527.7 L446.3 532.9 L447.3 537.5 L448.6 540.2 L449.8 542.5 L451.1 536.8 L452.4 531.3 L453.8 523.2 L455.1 515.8 L456.1 514.4 L457.2 512.7 L458.2 517.1 L459.3 521.0 L460.5 525.0 L461.7 529.2 L462.7 530.4 L463.8 531.1 L464.8 532.3 L466.3 537.5 M481.0 527.0 L482.4 524.0 L483.4 524.8 L484.4 525.1 L485.5 525.7 L486.5 526.0 L487.5 524.7 L488.5 522.5 L489.6 521.2 L490.6 519.8 L491.6 517.8 L492.6 516.5 L493.7 514.8 L494.7 512.9 L495.7 511.5 L496.8 510.4 L497.8 508.5 L498.9 511.0 L499.9 514.0 L500.9 517.3 L502.0 519.8 L503.0 522.5 L504.0 525.0 L505.0 528.0 L506.0 523.8 L507.1 520.1 L508.1 515.7 L509.1 510.1 L510.2 504.6 L511.2 499.2 L512.5 496.0 L513.7 507.5 L515.0 528.0 L515.8 541.0 M481.0 547.5 L482.4 544.5 L483.4 545.3 L484.4 545.6 L485.5 546.2 L486.5 546.5 L487.5 545.2 L488.5 543.0 L489.6 541.7 L490.6 540.3 L491.6 538.3 L492.6 537.0 L493.7 535.3 L494.7 533.4 L495.7 532.0 L496.8 530.9 L497.8 529.0 L498.9 531.5 L499.9 534.5 L500.9 537.8 L502.0 540.3 L503.0 543.0 L504.0 545.5 L505.0 548.5 L506.0 544.3 L507.1 540.6 L508.1 536.2 L509.1 530.6 L510.2 525.1 L511.2 519.7 L512.5 516.5 L513.7 528.0 L515.0 548.5 L515.8 561.5 M543.8 416.0 L545.6 393.4 L546.9 386.9 L548.2 381.0 L549.4 380.9 L550.6 380.5 L551.8 380.0 L553.0 380.6 L554.1 381.0 L555.3 382.0 L556.5 381.1 L557.6 379.9 L558.8 378.4 L560.0 377.2 L561.1 376.1 L562.3 374.9 L563.5 374.3 L564.7 373.8 L565.9 374.0 L567.2 371.2 L568.5 368.7 L569.8 366.1 L571.1 363.4 L572.3 361.5 L573.5 360.8 L574.7 359.0 L575.8 358.3 L576.9 357.8 L577.9 357.2 L579.0 357.2 L580.1 357.6 L581.2 357.2 L582.4 357.2 L583.5 356.7 L584.7 357.9 L585.8 358.4 L587.0 359.9 L588.4 363.2 L589.7 366.9 L590.9 369.3 L592.0 371.2 L593.2 374.0 L594.4 376.8 L595.5 378.5 L596.7 381.0 L597.8 384.2 L598.8 388.0 L599.7 392.0 M543.8 492.0 L545.6 469.4 L546.9 462.9 L548.2 457.0 L549.4 456.9 L550.6 456.5 L551.8 456.0 L553.0 456.6 L554.1 457.0 L555.3 458.0 L556.5 457.1 L557.6 455.9 L558.8 454.4 L560.0 453.2 L561.1 452.1 L562.3 450.9 L563.5 450.3 L564.7 449.8 L565.9 450.0 L567.2 447.2 L568.5 444.7 L569.8 442.1 L571.1 439.4 L572.3 437.5 L573.5 436.8 L574.7 435.0 L575.8 434.3 L576.9 433.8 L577.9 433.2 L579.0 433.2 L580.1 433.6 L581.2 433.2 L582.4 433.2 L583.5 432.7 L584.7 433.9 L585.8 434.4 L587.0 435.9 L588.4 439.2 L589.7 442.9 L590.9 445.3 L592.0 447.2 L593.2 450.0 L594.4 452.8 L595.5 454.5 L596.7 457.0 L597.8 460.2 L598.8 464.0 L599.7 468.0 M543.8 431.5 L545.6 408.9 L546.9 403.2 L548.2 396.5 L549.4 395.8 L550.6 395.4 L551.8 395.5 L553.0 396.7 L554.1 396.5 L555.3 397.5 L556.5 395.9 L557.6 395.3 L558.8 393.9 L560.0 392.6 L561.1 392.0 L562.3 390.4 L563.5 389.8 L564.7 390.3 L565.9 389.5 L567.2 386.7 L568.5 384.2 L569.8 381.7 L571.1 378.9 M543.8 511.5 L545.6 488.9 L546.9 483.2 L548.2 476.5 L549.4 475.8 L550.6 475.4 L551.8 475.5 L553.0 476.7 L554.1 476.5 L555.3 477.5 L556.5 475.9 L557.6 475.3 L558.8 473.9 L560.0 472.6 L561.1 472.0 L562.3 470.4 L563.5 469.8 L564.7 470.3 L565.9 469.5 L567.2 466.7 L568.5 464.2 L569.8 461.7 L571.1 458.9 M574.7 516.5 L575.8 516.5 L576.9 516.0 L577.9 515.5 L579.0 514.7 L580.1 514.2 L581.2 514.5 L582.4 514.2 L583.5 514.2 L584.7 515.3 L585.8 516.0 L587.0 517.4 L588.4 520.6 L589.7 524.4 L590.9 526.7 L592.0 528.9 L593.2 531.5 L594.4 533.8 L595.5 535.7 L596.7 538.5 L597.8 541.6 L598.8 545.5 L599.7 549.5 M610.0 399.5 L611.3 396.2 L612.6 392.4 L613.9 391.8 L615.2 390.5 L616.3 390.9 L617.4 392.4 L618.5 392.3 L619.6 393.3 L620.8 392.3 L622.0 390.6 L623.2 389.8 L624.4 388.9 L625.5 387.1 L626.7 386.2 L628.0 388.6 L629.3 390.5 L630.6 394.7 L632.0 398.5 L633.0 398.8 L634.0 398.5 L635.2 393.6 L636.4 388.9 L638.2 371.2 L639.9 362.4 L641.7 366.0 L643.4 385.3 L644.7 397.2 L646.0 408.3 L647.4 402.6 L648.7 395.9 L650.0 386.7 L651.4 378.3 L652.7 370.8 L654.0 363.3 L655.8 364.2 L657.1 377.8 L658.4 390.5 L659.5 397.7 L660.6 404.5 L661.7 400.9 L662.8 397.5 L664.1 390.3 L665.5 383.5 L666.8 378.7 L668.0 373.0 L669.4 366.3 L670.8 360.5 L672.1 352.9 L673.4 344.8 L674.7 335.0 L676.0 324.5 L677.0 320.4 L678.0 316.8 L679.0 313.1 L680.0 309.5 L681.0 308.5 L682.0 307.4 L683.0 306.5 L684.0 305.5 L685.0 304.1 L686.0 302.1 L687.0 301.3 L688.0 299.5 L689.0 298.4 L690.0 297.7 L691.0 297.5 L692.0 296.9 L693.0 296.2 L694.0 295.7 L695.0 294.5 L696.0 294.7 L697.0 294.0 L698.0 294.4 L699.0 294.4 L700.0 293.5 L701.0 293.7 L702.0 293.3 L703.0 293.5 L704.0 293.4 L705.0 294.1 L706.0 294.5 L707.0 295.1 L708.0 294.6 L709.0 295.2 L710.0 295.5 L711.0 297.0 L712.0 297.8 L713.0 298.5 L714.0 299.2 L715.0 300.6 L716.0 301.5 L717.0 302.6 L718.0 304.3 L719.0 305.6 L720.0 306.7 L721.0 308.5 L722.0 309.5 L723.0 311.8 L724.0 314.3 L725.0 317.0 L726.0 318.9 L727.0 321.5 L728.0 323.7 L729.0 326.6 L730.0 328.9 L731.0 331.5 L732.0 338.4 L733.0 344.5 L734.0 379.5 L735.0 400.2 L736.0 421.5 M610.0 479.5 L611.3 476.2 L612.6 472.4 L613.9 471.8 L615.2 470.5 L616.3 470.9 L617.4 472.4 L618.5 472.3 L619.6 473.3 L620.8 472.3 L622.0 470.6 L623.2 469.8 L624.4 468.9 L625.5 467.1 L626.7 466.2 L628.0 468.6 L629.3 470.5 L630.6 474.7 L632.0 478.5 L633.0 478.8 L634.0 478.5 L635.2 473.6 L636.4 468.9 L638.2 451.2 L639.9 442.4 L641.7 446.0 L643.4 465.3 L644.7 477.2 L646.0 488.3 L647.4 482.6 L648.7 475.9 L650.0 466.7 L651.4 458.3 L652.7 450.8 L654.0 443.3 L655.8 444.2 L657.1 457.8 L658.4 470.5 L659.5 477.7 L660.6 484.5 L661.7 480.9 L662.8 477.5 L664.1 470.3 L665.5 463.5 L666.8 458.7 L668.0 453.0 L669.4 446.3 L670.8 440.5 L672.1 432.9 L673.4 424.8 L674.7 415.0 L676.0 404.5 L677.0 400.4 L678.0 396.8 L679.0 393.1 L680.0 389.5 L681.0 388.5 L682.0 387.4 L683.0 386.5 L684.0 385.5 L685.0 384.1 L686.0 382.1 L687.0 381.3 L688.0 379.5 L689.0 378.4 L690.0 377.7 L691.0 377.5 L692.0 376.9 L693.0 376.2 L694.0 375.7 L695.0 374.5 L696.0 374.7 L697.0 374.0 L698.0 374.4 L699.0 374.4 L700.0 373.5 L701.0 373.7 L702.0 373.3 L703.0 373.5 L704.0 373.4 L705.0 374.1 L706.0 374.5 L707.0 375.1 L708.0 374.6 L709.0 375.2 L710.0 375.5 L711.0 377.0 L712.0 377.8 L713.0 378.5 L714.0 379.2 L715.0 380.6 L716.0 381.5 L717.0 382.6 L718.0 384.3 L719.0 385.6 L720.0 386.7 L721.0 388.5 L722.0 389.5 L723.0 391.8 L724.0 394.3 L725.0 397.0 L726.0 398.9 L727.0 401.5 L728.0 403.7 L729.0 406.6 L730.0 408.9 L731.0 411.5 L732.0 418.4 L733.0 424.5 L734.0 459.5 L735.0 480.2 L736.0 501.5 M610.0 520.0 L611.3 516.7 L612.6 512.9 L613.9 512.3 L615.2 511.0 L616.3 511.4 L617.4 512.9 L618.5 512.8 L619.6 513.8 L620.8 512.8 L622.0 511.1 L623.2 510.3 L624.4 509.4 L625.5 507.6 L626.7 506.7 L628.0 509.1 L629.3 511.0 L630.6 515.2 L632.0 519.0 L633.0 519.3 L634.0 519.0 L635.2 514.1 L636.4 509.4 L638.2 491.7 L639.9 482.9 L641.7 486.5 L643.4 505.8 L644.7 517.7 L646.0 528.8 L647.4 523.1 L648.7 516.4 L650.0 507.2 L651.4 498.8 L652.7 491.3 L654.0 483.8 L655.8 484.7 L657.1 498.3 L658.4 511.0 L659.5 518.2 L660.6 525.0 L661.7 521.4 L662.8 518.0 L664.1 510.8 L665.5 504.0 L666.8 499.2 L668.0 493.5 L669.4 486.8 L670.8 481.0 L672.1 473.4 L673.4 465.3 L674.7 455.5 L676.0 445.0 L677.0 440.9 L678.0 437.3 L679.0 433.6 L680.0 430.0 L681.0 429.0 L682.0 427.9 L683.0 427.0 L684.0 426.0 L685.0 424.6 L686.0 422.6 L687.0 421.8 L688.0 420.0 L689.0 418.9 L690.0 418.2 L691.0 418.0 L692.0 417.4 L693.0 416.7 L694.0 416.2 L695.0 415.0 L696.0 415.2 L697.0 414.5 L698.0 414.9 L699.0 414.9 L700.0 414.0 L701.0 414.2 L702.0 413.8 L703.0 414.0 L704.0 413.9 L705.0 414.6 L706.0 415.0 L707.0 415.6 L708.0 415.1 L709.0 415.7 L710.0 416.0 L711.0 417.5 L712.0 418.3 L713.0 419.0 L714.0 419.7 L715.0 421.1 L716.0 422.0 L717.0 423.1 L718.0 424.8 L719.0 426.1 L720.0 427.2 L721.0 429.0 L722.0 430.0 L723.0 432.3 L724.0 434.8 L725.0 437.5 L726.0 439.4 L727.0 442.0 L728.0 444.2 L729.0 447.1 L730.0 449.4 L731.0 452.0 L732.0 458.9 L733.0 465.0 L734.0 500.0 L735.0 520.7 L736.0 542.0 M106.5 335.7 L107.5 342.9 L108.5 339.7 L109.5 343.3 L110.5 341.6 L111.5 339.7 L112.5 340.6 L113.5 331.6 L114.5 336.9 L115.5 335.7 L116.5 336.2 L117.5 334.1 L118.5 335.2 L119.5 336.4 L120.5 340.7 L121.5 331.1 L122.5 329.8 L123.5 333.2 L124.5 329.3 L125.5 332.3 L126.5 329.8 L127.5 327.4 L128.5 327.0 L129.5 326.5 L130.5 329.0 L131.5 332.7 L132.5 328.2 L133.5 334.6 L134.5 325.3 L135.5 326.9 L136.5 327.2 L137.5 330.7 L138.5 325.3 M106.5 395.6 L107.5 402.5 L108.5 400.9 L109.5 395.6 L110.5 398.5 L111.5 397.5 L112.5 403.0 L113.5 395.7 L114.5 396.7 L115.5 392.7 L116.5 401.0 L117.5 395.3 L118.5 396.1 L119.5 396.0 L120.5 393.5 L121.5 393.8 L122.5 396.2 L123.5 397.0 L124.5 397.0 L125.5 395.9 L126.5 396.6 L127.5 399.1 L128.5 388.3 L129.5 397.7 L130.5 396.2 L131.5 392.8 L132.5 391.5 L133.5 389.2 L134.5 392.5 L135.5 387.2 L136.5 388.4 L137.5 387.0 L138.5 389.1 M740.2 375.0 L741.0 369.4 L742.5 370.6 L744.0 371.3 L745.5 371.6 L747.0 370.7 L748.5 370.7 L750.0 369.2 L751.5 370.8 L753.0 372.8 L754.5 373.3 L756.0 374.0 L757.5 372.0 L759.0 371.5 L760.5 369.9 L762.0 369.8 L763.5 369.9 L765.0 369.3 L766.5 370.1 L768.0 370.1 L769.5 370.5 L771.0 369.2 L772.5 367.5 L774.0 368.7 L775.5 368.4 L777.0 370.6 L778.5 370.8 L780.0 371.0 L781.5 372.2 L783.0 370.3 L784.5 369.8 L786.0 371.2 L787.5 371.6 L789.0 371.3 L790.5 373.0 L792.0 372.0 L793.5 371.4 L795.0 369.4 L796.5 370.0 L798.0 369.6 L799.5 370.8 L801.0 371.6 L802.5 371.2 L804.0 371.3 L805.5 370.3 L807.0 369.3 L808.5 368.6 L810.0 369.2 L811.5 370.4 L813.0 370.1 L814.5 371.6 L816.0 370.6 L817.5 369.6 L819.0 369.6 L820.5 368.5 L822.0 368.5 L823.5 369.8 L825.0 371.3 L826.5 370.9 L828.0 372.6 L829.5 370.4 L831.0 371.1 L832.5 371.1 L834.0 370.1 L835.5 372.4 L837.0 372.4 L838.5 372.9 L840.0 371.1 L841.5 369.9 L843.0 368.8 L844.5 369.5 L846.0 368.1 L847.5 369.7 L849.0 370.7 L850.5 370.9 L852.0 369.4 L853.5 368.8 L855.0 368.6 L856.5 369.3 L858.0 369.1 L859.5 371.6 L861.0 372.9 L862.5 373.4 L864.0 371.6 L865.5 372.4 L867.0 370.0 L868.5 370.2 L870.0 371.0 L871.5 372.2 L873.0 371.5 L874.5 372.3 L876.0 370.7 L877.5 369.1 L879.0 368.3 L880.5 368.0 L882.0 368.5 L883.5 369.7 L885.0 371.5 L886.5 372.2 L888.0 370.1 L889.5 369.1 L891.0 370.3 L892.5 369.6 L894.0 370.1 L895.5 370.7 L897.0 371.8 L897.5 375.0 M740.2 396.0 L741.0 390.4 L742.5 391.6 L744.0 392.3 L745.5 392.6 L747.0 391.7 L748.5 391.7 L750.0 390.2 L751.5 391.8 L753.0 393.8 L754.5 394.3 L756.0 395.0 L757.5 393.0 L759.0 392.5 L760.5 390.9 L762.0 390.8 L763.5 390.9 L765.0 390.3 L766.5 391.1 L768.0 391.1 L769.5 391.5 L771.0 390.2 L772.5 388.5 L774.0 389.7 L775.5 389.4 L777.0 391.6 L778.5 391.8 L780.0 392.0 L781.5 393.2 L783.0 391.3 L784.5 390.8 L786.0 392.2 L787.5 392.6 L789.0 392.3 L790.5 394.0 L792.0 393.0 L793.5 392.4 L795.0 390.4 L796.5 391.0 L798.0 390.6 L799.5 391.8 L801.0 392.6 L802.5 392.2 L804.0 392.3 L805.5 391.3 L807.0 390.3 L808.5 389.6 L810.0 390.2 L811.5 391.4 L813.0 391.1 L814.5 392.6 L816.0 391.6 L817.5 390.6 L819.0 390.6 L820.5 389.5 L822.0 389.5 L823.5 390.8 L825.0 392.3 L826.5 391.9 L828.0 393.6 L829.5 391.4 L831.0 392.1 L832.5 392.1 L834.0 391.1 L835.5 393.4 L837.0 393.4 L838.5 393.9 L840.0 392.1 L841.5 390.9 L843.0 389.8 L844.5 390.5 L846.0 389.1 L847.5 390.7 L849.0 391.7 L850.5 391.9 L852.0 390.4 L853.5 389.8 L855.0 389.6 L856.5 390.3 L858.0 390.1 L859.5 392.6 L861.0 393.9 L862.5 394.4 L864.0 392.6 L865.5 393.4 L867.0 391.0 L868.5 391.2 L870.0 392.0 L871.5 393.2 L873.0 392.5 L874.5 393.3 L876.0 391.7 L877.5 390.1 L879.0 389.3 L880.5 389.0 L882.0 389.5 L883.5 390.7 L885.0 392.5 L886.5 393.2 L888.0 391.1 L889.5 390.1 L891.0 391.3 L892.5 390.6 L894.0 391.1 L895.5 391.7 L897.0 392.8 L897.5 396.0 M740.2 476.0 L741.0 470.4 L742.5 471.6 L744.0 472.3 L745.5 472.6 L747.0 471.7 L748.5 471.7 L750.0 470.2 L751.5 471.8 L753.0 473.8 L754.5 474.3 L756.0 475.0 L757.5 473.0 L759.0 472.5 L760.5 470.9 L762.0 470.8 L763.5 470.9 L765.0 470.3 L766.5 471.1 L768.0 471.1 L769.5 471.5 L771.0 470.2 L772.5 468.5 L774.0 469.7 L775.5 469.4 L777.0 471.6 L778.5 471.8 L780.0 472.0 L781.5 473.2 L783.0 471.3 L784.5 470.8 L786.0 472.2 L787.5 472.6 L789.0 472.3 L790.5 474.0 L792.0 473.0 L793.5 472.4 L795.0 470.4 L796.5 471.0 L798.0 470.6 L799.5 471.8 L801.0 472.6 L802.5 472.2 L804.0 472.3 L805.5 471.3 L807.0 470.3 L808.5 469.6 L810.0 470.2 L811.5 471.4 L813.0 471.1 L814.5 472.6 L816.0 471.6 L817.5 470.6 L819.0 470.6 L820.5 469.5 L822.0 469.5 L823.5 470.8 L825.0 472.3 L826.5 471.9 L828.0 473.6 L829.5 471.4 L831.0 472.1 L832.5 472.1 L834.0 471.1 L835.5 473.4 L837.0 473.4 L838.5 473.9 L840.0 472.1 L841.5 470.9 L843.0 469.8 L844.5 470.5 L846.0 469.1 L847.5 470.7 L849.0 471.7 L850.5 471.9 L852.0 470.4 L853.5 469.8 L855.0 469.6 L856.5 470.3 L858.0 470.1 L859.5 472.6 L861.0 473.9 L862.5 474.4 L864.0 472.6 L865.5 473.4 L867.0 471.0 L868.5 471.2 L870.0 472.0 L871.5 473.2 L873.0 472.5 L874.5 473.3 L876.0 471.7 L877.5 470.1 L879.0 469.3 L880.5 469.0 L882.0 469.5 L883.5 470.7 L885.0 472.5 L886.5 473.2 L888.0 471.1 L889.5 470.1 L891.0 471.3 L892.5 470.6 L894.0 471.1 L895.5 471.7 L897.0 472.8 L897.5 476.0" fill="none" stroke="#ebebeb" stroke-width="1.3" stroke-linejoin="round"/><path d="M52.0 352.0 L52.6 300.0 L54.5 296.0 L55.6 296.7 L56.8 297.6 L57.9 298.8 L59.0 299.0 L60.1 297.6 L61.2 296.4 L62.3 295.1 L63.4 293.7 L64.5 292.5 L65.6 292.2 L66.7 291.4 L67.8 291.9 L69.0 292.4 L70.1 291.7 L71.2 292.5 L72.3 292.9 L73.4 293.3 L74.6 295.0 L75.7 295.6 L76.8 296.0 L77.9 293.8 L78.9 293.6 L80.0 291.4 L81.2 293.2 L82.4 293.7 L83.2 300.0 L83.8 352.0 M86.8 352.0 L87.5 300.0 L88.4 273.6 L90.2 264.6 L91.3 262.9 L92.4 261.3 L93.5 261.1 L94.7 260.7 L95.8 260.0 L96.9 257.9 L98.0 256.8 L99.1 254.3 L100.2 253.0 L101.3 251.3 L102.4 249.1 L103.6 248.0 L104.7 245.7 L105.8 243.7 L107.0 241.2 M107.0 241.2 L108.1 240.0 L109.2 240.1 L110.3 239.0 L111.4 239.6 L112.5 240.1 L113.6 239.2 L114.7 240.0 L115.8 238.7 L117.0 237.7 L118.1 237.0 L119.2 236.7 L120.3 236.6 L121.5 234.9 L122.6 235.1 L123.7 234.5 L124.8 233.3 L125.9 232.7 L127.0 232.3 L128.1 232.9 L129.3 234.4 L130.4 234.5 L131.4 233.4 L132.4 231.1 L133.4 230.3 L134.4 229.4 L135.7 230.8 L136.9 234.2 L138.2 235.6 L139.3 236.3 L140.4 236.4 L141.5 236.5 L142.6 236.0 L143.8 235.9 L145.1 235.7 L146.3 234.9 L147.5 233.8 M187.0 330.0 L187.7 301.0 L188.8 298.9 L190.0 297.5 L191.0 298.3 L192.0 298.9 L193.0 299.8 L194.0 300.0 L195.0 300.3 L196.0 300.9 L197.0 301.7 L198.0 299.6 L199.0 297.2 L200.0 294.7 L201.0 292.7 L202.0 291.3 L203.0 289.3 L204.4 291.7 L205.0 305.0 M207.0 305.0 L207.6 362.0 M220.0 346.0 L221.0 335.0 L222.0 331.3 L223.0 327.9 L224.0 324.4 L225.2 326.1 L226.4 328.0 L227.4 329.2 L228.5 330.5 L229.5 331.9 L230.5 331.0 L231.6 329.6 L232.6 328.8 L233.8 328.0 L234.9 327.0 L236.2 327.1 L237.5 328.0 L238.8 328.8 L239.8 328.9 L240.9 328.9 L241.9 329.5 L243.1 332.1 L244.2 334.2 L245.2 332.2 L246.3 330.9 L247.3 328.8 L248.3 327.8 L249.4 325.6 L250.4 324.4 L251.6 325.8 L252.7 326.5 L253.8 332.6 L255.0 338.0 L256.0 346.6 L257.3 344.2 L258.5 338.2 L259.7 331.9 L260.9 325.2 L262.0 319.5 L263.1 317.0 L264.3 314.5 L265.8 318.0 L267.0 323.5 L268.2 328.8 L269.4 330.5 L270.5 332.6 L272.3 328.8 M288.3 298.6 L289.5 285.5 L291.4 287.8 L292.5 287.6 L293.7 287.7 L294.9 287.7 L296.0 287.0 L297.1 286.2 L298.3 286.1 L299.5 285.5 L300.6 284.7 L301.6 285.4 L302.7 285.3 L303.7 286.2 L304.7 286.8 L305.8 288.2 L306.8 289.3 L308.0 288.8 L309.1 287.5 L310.3 287.0 L311.5 286.2 L312.6 288.8 L313.8 291.7 L315.0 295.9 L316.1 299.4 L317.2 299.8 L318.4 299.4 L319.4 296.2 L320.5 293.7 L321.5 290.1 L322.5 286.5 L323.6 284.0 L324.6 280.5 L325.8 283.4 L326.9 285.5 L328.8 299.4 L329.8 305.3 L330.8 311.8 L332.4 311.0 L333.9 297.0 L335.0 291.5 L336.2 285.5 L337.8 281.6 L339.0 290.0 L339.8 316.0 M347.6 450.0 L348.7 431.6 L350.0 426.1 L351.3 421.3 L352.4 418.4 L353.4 414.9 L354.4 411.6 L355.5 408.9 L356.5 406.8 L357.6 404.7 L358.6 402.7 L359.6 400.6 L360.6 399.7 L361.7 398.7 L362.7 397.8 L363.8 397.6 L364.8 396.5 L365.8 396.0 L366.9 396.2 L367.9 396.0 L368.9 395.9 L370.0 395.7 L371.0 394.9 L372.0 394.3 L373.0 394.1 L374.0 394.4 L375.0 394.0 L376.0 393.3 L377.0 393.4 L378.1 394.0 L379.1 394.5 L380.1 394.9 L381.2 394.5 L382.2 394.9 L383.3 395.5 L384.3 395.2 L385.4 396.7 L386.4 396.2 L387.4 397.1 L388.5 397.2 L389.5 397.5 L390.6 398.4 L391.8 399.1 L392.9 400.2 L394.0 400.6 L395.4 404.9 L396.7 408.9 L397.7 412.8 L398.8 416.7 L399.8 421.3 L400.9 429.5 L401.9 437.8 L402.9 450.7 L404.0 462.5 L405.6 483.0 L406.4 500.0 M413.0 505.0 L414.3 479.0 L415.3 476.7 L416.4 474.4 L417.4 471.8 L418.4 470.8 L419.4 469.8 L420.5 468.7 L421.5 468.1 L422.5 466.7 L423.6 467.3 L424.6 467.9 L425.6 468.8 L426.7 469.7 L427.7 469.8 L428.8 470.1 L429.8 470.3 L430.8 470.8 L431.8 472.2 L432.9 474.1 L433.9 476.0 L434.9 474.4 L436.0 473.3 L437.0 471.8 L438.0 469.2 L439.0 466.7 L440.0 464.6 L441.0 460.2 L442.0 456.3 L443.1 459.4 L444.2 462.5 L445.2 467.2 L446.3 472.4 L447.3 477.0 L448.6 479.7 L449.8 482.0 L451.1 476.3 L452.4 470.8 L453.8 462.7 L455.1 455.3 L456.1 453.9 L457.2 452.2 L458.2 456.6 L459.3 460.5 L460.5 464.5 L461.7 468.7 L462.7 469.9 L463.8 470.6 L464.8 471.8 L466.3 477.0 M481.0 447.0 L482.4 444.0 L483.4 444.8 L484.4 445.1 L485.5 445.7 L486.5 446.0 L487.5 444.7 L488.5 442.5 L489.6 441.2 L490.6 439.8 L491.6 437.8 L492.6 436.5 L493.7 434.8 L494.7 432.9 L495.7 431.5 L496.8 430.4 L497.8 428.5 L498.9 431.0 L499.9 434.0 L500.9 437.3 L502.0 439.8 L503.0 442.5 L504.0 445.0 L505.0 448.0 L506.0 443.8 L507.1 440.1 L508.1 435.7 L509.1 430.1 L510.2 424.6 L511.2 419.2 L512.5 416.0 L513.7 427.5 L515.0 448.0 L515.8 461.0 M543.8 352.0 L545.6 329.4 L546.9 322.9 L548.2 317.0 L549.4 316.9 L550.6 316.5 L551.8 316.0 L553.0 316.6 L554.1 317.0 L555.3 318.0 L556.5 317.1 L557.6 315.9 L558.8 314.4 L560.0 313.2 L561.1 312.1 L562.3 310.9 L563.5 310.3 L564.7 309.8 L565.9 310.0 L567.2 307.2 L568.5 304.7 L569.8 302.1 L571.1 299.4 L572.3 297.5 L573.5 296.8 L574.7 295.0 L575.8 294.3 L576.9 293.8 L577.9 293.2 L579.0 293.2 L580.1 293.6 L581.2 293.2 L582.4 293.2 L583.5 292.7 L584.7 293.9 L585.8 294.4 L587.0 295.9 L588.4 299.2 L589.7 302.9 L590.9 305.3 L592.0 307.2 L593.2 310.0 L594.4 312.8 L595.5 314.5 L596.7 317.0 L597.8 320.2 L598.8 324.0 L599.7 328.0 M610.0 340.0 L611.3 336.7 L612.6 332.9 L613.9 332.3 L615.2 331.0 L616.3 331.4 L617.4 332.9 L618.5 332.8 L619.6 333.8 L620.8 332.8 L622.0 331.1 L623.2 330.3 L624.4 329.4 L625.5 327.6 L626.7 326.7 L628.0 329.1 L629.3 331.0 L630.6 335.2 L632.0 339.0 L633.0 339.3 L634.0 339.0 L635.2 334.1 L636.4 329.4 L638.2 311.7 L639.9 302.9 L641.7 306.5 L643.4 325.8 L644.7 337.7 L646.0 348.8 L647.4 343.1 L648.7 336.4 L650.0 327.2 L651.4 318.8 L652.7 311.3 L654.0 303.8 L655.8 304.7 L657.1 318.3 L658.4 331.0 L659.5 338.2 L660.6 345.0 L661.7 341.4 L662.8 338.0 L664.1 330.8 L665.5 324.0 L666.8 319.2 L668.0 313.5 L669.4 306.8 L670.8 301.0 L672.1 293.4 L673.4 285.3 L674.7 275.5 L676.0 265.0 L677.0 260.9 L678.0 257.3 L679.0 253.6 L680.0 250.0 L681.0 249.0 L682.0 247.9 L683.0 247.0 L684.0 246.0 L685.0 244.6 L686.0 242.6 L687.0 241.8 L688.0 240.0 L689.0 238.9 L690.0 238.2 L691.0 238.0 L692.0 237.4 L693.0 236.7 L694.0 236.2 L695.0 235.0 L696.0 235.2 L697.0 234.5 L698.0 234.9 L699.0 234.9 L700.0 234.0 L701.0 234.2 L702.0 233.8 L703.0 234.0 L704.0 233.9 L705.0 234.6 L706.0 235.0 L707.0 235.6 L708.0 235.1 L709.0 235.7 L710.0 236.0 L711.0 237.5 L712.0 238.3 L713.0 239.0 L714.0 239.7 L715.0 241.1 L716.0 242.0 L717.0 243.1 L718.0 244.8 L719.0 246.1 L720.0 247.2 L721.0 249.0 L722.0 250.0 L723.0 252.3 L724.0 254.8 L725.0 257.5 L726.0 259.4 L727.0 262.0 L728.0 264.2 L729.0 267.1 L730.0 269.4 L731.0 272.0 L732.0 278.9 L733.0 285.0 L734.0 320.0 L735.0 340.7 L736.0 362.0 M739.5 330.0 L740.2 296.0 L741.0 290.4 L742.5 291.6 L744.0 292.3 L745.5 292.6 L747.0 291.7 L748.5 291.7 L750.0 290.2 L751.5 291.8 L753.0 293.8 L754.5 294.3 L756.0 295.0 L757.5 293.0 L759.0 292.5 L760.5 290.9 L762.0 290.8 L763.5 290.9 L765.0 290.3 L766.5 291.1 L768.0 291.1 L769.5 291.5 L771.0 290.2 L772.5 288.5 L774.0 289.7 L775.5 289.4 L777.0 291.6 L778.5 291.8 L780.0 292.0 L781.5 293.2 L783.0 291.3 L784.5 290.8 L786.0 292.2 L787.5 292.6 L789.0 292.3 L790.5 294.0 L792.0 293.0 L793.5 292.4 L795.0 290.4 L796.5 291.0 L798.0 290.6 L799.5 291.8 L801.0 292.6 L802.5 292.2 L804.0 292.3 L805.5 291.3 L807.0 290.3 L808.5 289.6 L810.0 290.2 L811.5 291.4 L813.0 291.1 L814.5 292.6 L816.0 291.6 L817.5 290.6 L819.0 290.6 L820.5 289.5 L822.0 289.5 L823.5 290.8 L825.0 292.3 L826.5 291.9 L828.0 293.6 L829.5 291.4 L831.0 292.1 L832.5 292.1 L834.0 291.1 L835.5 293.4 L837.0 293.4 L838.5 293.9 L840.0 292.1 L841.5 290.9 L843.0 289.8 L844.5 290.5 L846.0 289.1 L847.5 290.7 L849.0 291.7 L850.5 291.9 L852.0 290.4 L853.5 289.8 L855.0 289.6 L856.5 290.3 L858.0 290.1 L859.5 292.6 L861.0 293.9 L862.5 294.4 L864.0 292.6 L865.5 293.4 L867.0 291.0 L868.5 291.2 L870.0 292.0 L871.5 293.2 L873.0 292.5 L874.5 293.3 L876.0 291.7 L877.5 290.1 L879.0 289.3 L880.5 289.0 L882.0 289.5 L883.5 290.7 L885.0 292.5 L886.5 293.2 L888.0 291.1 L889.5 290.1 L891.0 291.3 L892.5 290.6 L894.0 291.1 L895.5 291.7 L897.0 292.8 L897.5 296.0" fill="none" stroke="#a2a2a2" stroke-width="1.2" stroke-linejoin="round"/></svg>
<div style="left:205px;top:181px;width:1px;height:363px;background:#00ee00"></div>
<div style="left:899px;top:150px;width:16px;height:324px;background:#262b33"></div>
<div class="sbb" style="left:899px;top:151px;width:16px;height:17px"></div>
<div style="left:898px;top:151px;width:1px;height:393px;background:#c4c8cc"></div>
<div class="sbb" style="left:899px;top:474px;width:16px;height:85px"></div>
<div style="left:914px;top:168px;width:1px;height:306px;background:#3a424c"></div>
<div class="thumb" style="left:899px;top:308px;width:15px;height:17px"></div>
<div style="left:905px;top:498px;width:1px;height:40px;background:#858585"></div><div style="left:907px;top:498px;width:1px;height:40px;background:#858585"></div>
<div style="left:900px;top:505px;width:14px;height:8px;background:#7d8896;border:1px solid #a9b2bd"></div>
<div class="sbb" style="left:2px;top:544px;width:913px;height:15px"></div>
<div style="left:19px;top:544px;width:794px;height:15px;background:#242932"></div>
<div class="thumb" style="left:254px;top:544px;width:17px;height:15px"></div>
<div style="left:835px;top:550px;width:57px;height:1px;background:#858585"></div><div style="left:835px;top:552px;width:57px;height:1px;background:#858585"></div>
<div style="left:854px;top:545px;width:8px;height:13px;background:#7d8896;border:1px solid #a9b2bd"></div>
<div style="left:2px;top:559px;width:913px;height:1px;background:#3a4049"></div>
<div style="left:0;top:581px;width:917px;height:1px;background:#4d4d4d"></div>
<svg style="left:0;top:0;width:1191px;height:582px;pointer-events:none" viewBox="0 0 1191 582"><path d="M903.0 41.3 L906.5 37.8 L910.0 41.3" fill="none" stroke="#bcc4cd" stroke-width="2.3"/><path d="M903.0 84.5 L906.5 88.0 L910.0 84.5" fill="none" stroke="#bcc4cd" stroke-width="2.3"/><path d="M12.5 134.5 L9.0 138 L12.5 141.5" fill="none" stroke="#bcc4cd" stroke-width="2.3"/><path d="M853 134.5 L856.5 138 L853 141.5" fill="none" stroke="#bcc4cd" stroke-width="2.3"/><path d="M903.0 161.5 L906.5 158.0 L910.0 161.5" fill="none" stroke="#bcc4cd" stroke-width="2.3"/><path d="M903.0 482 L906.5 485.5 L910.0 482" fill="none" stroke="#bcc4cd" stroke-width="2.3"/><path d="M12.5 548.0 L9.0 551.5 L12.5 555.0" fill="none" stroke="#bcc4cd" stroke-width="2.3"/><path d="M819 548.0 L822.5 551.5 L819 555.0" fill="none" stroke="#bcc4cd" stroke-width="2.3"/><path d="M903 103.5 H911" stroke="#a9b4c0" stroke-width="1.2"/><path d="M903 120.5 H911 M907 116.5 V124.5 M868.5 137.5 H876.5 M885.5 137.5 H893.5 M889.5 133.5 V141.5" stroke="#0a0a0a" stroke-width="1.3"/></svg>
<div class="st" id="st0" style="left:20.7px;transform:scaleX(0.850)">[</div><div class="st" id="st1" style="left:28.0px;transform:scaleX(0.976)">32Bit</div><div class="st" id="st2" style="left:67.4px;transform:scaleX(0.880)">44100Hz</div><div class="st" id="st3" style="left:114.4px;transform:scaleX(0.850)">]</div><div class="st" id="st4" style="left:130.8px;transform:scaleX(0.850)">[</div><div class="st" id="st5" style="left:137.9px;transform:scaleX(0.846)">32</div><div class="st" id="st6" style="left:153.3px;transform:scaleX(0.850)">:</div><div class="st" id="st7" style="left:159.9px;transform:scaleX(0.850)">2</div><div class="st" id="st8" style="left:169.9px;transform:scaleX(0.850)">:</div><div class="st" id="st9" style="left:177.7px;transform:scaleX(0.819)">162</div><div class="st" id="st10" style="left:198.1px;transform:scaleX(0.850)">]</div><div class="st" id="st11" style="left:205.2px;transform:scaleX(0.850)">:</div><div class="st" id="st12" style="left:212.8px;transform:scaleX(0.850)">[</div><div class="st" id="st13" style="left:219.5px;transform:scaleX(0.850)">&gt;</div><div class="st" id="st14" style="left:231.3px;transform:scaleX(0.756)">12</div><div class="st" id="st15" style="left:245.1px;transform:scaleX(0.850)">:</div><div class="st" id="st16" style="left:252.1px;transform:scaleX(0.850)">4</div><div class="st" id="st17" style="left:261.4px;transform:scaleX(0.850)">:</div><div class="st" id="st18" style="left:268.4px;transform:scaleX(0.839)">448</div><div class="st" id="st19" style="left:290.2px;transform:scaleX(0.850)">]</div><div class="st" id="st20" style="left:302.8px;transform:scaleX(0.850)">[</div><div class="st" id="st21" style="left:309.7px;transform:scaleX(0.850)">x</div><div class="st" id="st22" style="left:320.3px;transform:scaleX(0.850)">1</div><div class="st" id="st23" style="left:329.4px;transform:scaleX(0.850)">:</div><div class="st" id="st24" style="left:336.0px;transform:scaleX(0.839)">512</div><div class="st" id="st25" style="left:357.6px;transform:scaleX(0.850)">]</div><div class="st" id="st26" style="left:370.3px;transform:scaleX(0.973)">[Select</div><div class="st" id="st27" style="left:409.5px;transform:scaleX(0.850)">:</div><div class="st" id="st28" style="left:421.0px;transform:scaleX(0.838)">12</div><div class="st" id="st29" style="left:435.6px;transform:scaleX(0.850)">:</div><div class="st" id="st30" style="left:442.2px;transform:scaleX(0.850)">4</div><div class="st" id="st31" style="left:450.8px;transform:scaleX(0.850)">:</div><div class="st" id="st32" style="left:458.4px;transform:scaleX(0.844)">314</div><div class="st" id="st33" style="left:480.8px;transform:scaleX(0.850)">-</div><div class="st" id="st34" style="left:490.1px;transform:scaleX(0.838)">13</div><div class="st" id="st35" style="left:504.8px;transform:scaleX(0.850)">:</div><div class="st" id="st36" style="left:511.0px;transform:scaleX(0.850)">3</div><div class="st" id="st37" style="left:519.5px;transform:scaleX(0.850)">:</div><div class="st" id="st38" style="left:527.0px;transform:scaleX(0.954)">433</div><div class="st" id="st39" style="left:550.4px;transform:scaleX(0.850)">]</div>
<div style="left:917px;top:29px;width:4px;height:553px;background:linear-gradient(to right,#c4c4c4,#f2f2f2 30%,#f2f2f2 70%,#cccccc)"></div>
<div style="left:921px;top:29px;width:270px;height:18px;background:#3a4450"></div>
<div style="left:921px;top:47px;width:270px;height:2px;background:#f4f4f4"></div>
<div style="left:921px;top:558px;width:270px;height:1px;background:#0f1216"></div>
<svg style="left:921px;top:559px;width:270px;height:23px" viewBox="921 559 270 23"><path d="M922 559 L1036 559 L1030 582 L929 582 Z" fill="#3a4450"/><path d="M1039 559 L1046 582 M1142 559 L1135 582" stroke="#3a424d" stroke-width="1.2" fill="none"/><path d="M1039 559.5 H1142" stroke="#14171c" stroke-width="1"/></svg>
<div id="t0" class="lbl" style="left:923.9px;top:31px;transform:scaleX(0.8417)">ピッチタイムエディット</div>
<div id="l1" class="lbl" style="left:927.3px;top:61px;transform:scaleX(0.9347)">ピッチの矯正</div>
<div id="l2" class="lbl" style="left:1032.8px;top:61px;transform:scaleX(0.9064)">ピッチクォンタイズ</div>
<div id="l3" class="lbl" style="left:928px;top:125px;transform:scaleX(0.9117)">フォルマントシフト</div>
<div id="l4" class="lbl" style="left:1034.5px;top:201.5px;transform:scaleX(0.9018)">タイムクォンタイズ</div>
<div id="l5" class="lbl" style="left:928.8px;top:219px;transform:scaleX(0.9106)">グリッドの種類</div>
<div id="l6" class="lbl" style="left:928.8px;top:285px;transform:scaleX(0.9044)">フェードイン/アウト</div>
<div id="l7" class="lbl" style="left:928.8px;top:295.7px;transform:scaleX(0.9217)">する時間(ms)</div>
<div id="l8" class="lbl" style="left:1034.6px;top:288.5px;transform:scaleX(0.8845)">フェードイン</div>
<div id="l9" class="lbl" style="left:1034.6px;top:315px;transform:scaleX(0.8797)">フェードアウト</div>
<div id="l10" class="lbl" style="left:951.3px;top:361px;transform:scaleX(0.8047)">スムージング</div>
<div id="l11" class="lbl" style="left:1034.6px;top:360px;transform:scaleX(0.9387)">スムージングする</div>
<div id="l12" class="lbl" style="left:1034.6px;top:372px;transform:scaleX(0.9231)">最大範囲(ms)</div>
<div id="l13" class="lbl" style="left:928.8px;top:417px;transform:scaleX(0.8958)">タイムストレッチのモード</div>
<div id="tab1" class="lbl" style="left:927.4px;top:562.5px;transform:scaleX(0.8457)">ピッチタイムエディット</div>
<div id="tab2" class="lbl" style="left:1044px;top:562.5px;transform:scaleX(0.9280)">マーカー一覧表示</div>
<svg style="left:1150px;top:30px;width:41px;height:17px" viewBox="1150 30 41 17"><path d="M1162 35.5 H1167.5 M1162.5 35.5 V40 M1166.5 35.5 V40 M1165.8 35.5 V40 M1161 40.5 H1168.2 M1164.5 41 V43.4" stroke="#f4f4f4" stroke-width="1" fill="none"/><path d="M1177.6 35.3 L1184.6 42 M1184.6 35.3 L1177.6 42" stroke="#f4f4f4" stroke-width="1.7" fill="none"/></svg>
<div style="left:1142px;top:54px;width:43px;height:22px;background:#e1e1e1;border:1px solid #f8f8f8;box-shadow:inset 0 0 0 1px #8e8e8e;color:#000;font-size:13px;line-height:20px;text-align:center"><span id="ap" style="position:static;display:inline-block;transform:scaleX(0.9225)">適用</span></div>
<div class="sl" style="left:930px;top:78px;width:92px"></div>
<div class="sl" style="left:1036px;top:78px;width:92px"></div>
<div class="sl" style="left:930px;top:142px;width:92px"></div>
<div class="sl" style="left:1036px;top:218px;width:92px"></div>
<div style="left:931px;top:143px;width:42px;height:10px;background:repeating-linear-gradient(to right,#3fb4d6 0px,#3fb4d6 1px,#1e7fa0 1px,#1e7fa0 2px)"></div>
<div class="slh" style="left:930px;top:78px"></div>
<div class="slh" style="left:1036px;top:78px"></div>
<div class="slh" style="left:972px;top:142px"></div>
<div class="slh" style="left:1036px;top:218px"></div>
<div class="vbtn" style="left:937px;top:95px;width:78px"><span id="b1" style="transform:scaleX(1.0000)">0</span></div>
<div class="vbtn" style="left:1043px;top:95px;width:78px"><span id="b2" style="transform:scaleX(1.0000)">0</span></div>
<div class="vbtn" style="left:937px;top:159px;width:78px"><span id="b3" style="transform:scaleX(1.0000)">0</span></div>
<div class="vbtn" style="left:937px;top:235px;width:78px"><span id="b4" style="transform:scaleX(0.8915)">8分グリッド</span></div>
<div class="vbtn" style="left:1043px;top:235px;width:78px"><span id="b5" style="transform:scaleX(1.0000)">0</span></div>
<div class="vbtn" style="left:937px;top:311px;width:78px"><span id="b6" style="transform:scaleX(1.0000)">30</span></div>
<div class="vbtn" style="left:1115px;top:286px;width:58px"><span id="b7" style="transform:scaleX(1.0202)">直線</span></div>
<div class="vbtn" style="left:1115px;top:311px;width:58px"><span id="b8" style="transform:scaleX(1.0202)">直線</span></div>
<div class="vbtn" style="left:1043px;top:387px;width:78px"><span id="b9" style="transform:scaleX(1.0000)">50</span></div>
<div class="vbtn" style="left:1063px;top:413px;width:58px"><span id="b10" style="transform:scaleX(0.8628)">モード1</span></div>
<div class="sep" style="top:192px"></div>
<div class="sep" style="top:268px"></div>
<div class="sep" style="top:344px"></div>
<div style="left:936px;top:362px;width:13px;height:13px;background:#fff;border:1px solid #6a6a6a;box-shadow:inset 0 0 0 1px #d8d8d8"></div>
</div>
</body></html>
